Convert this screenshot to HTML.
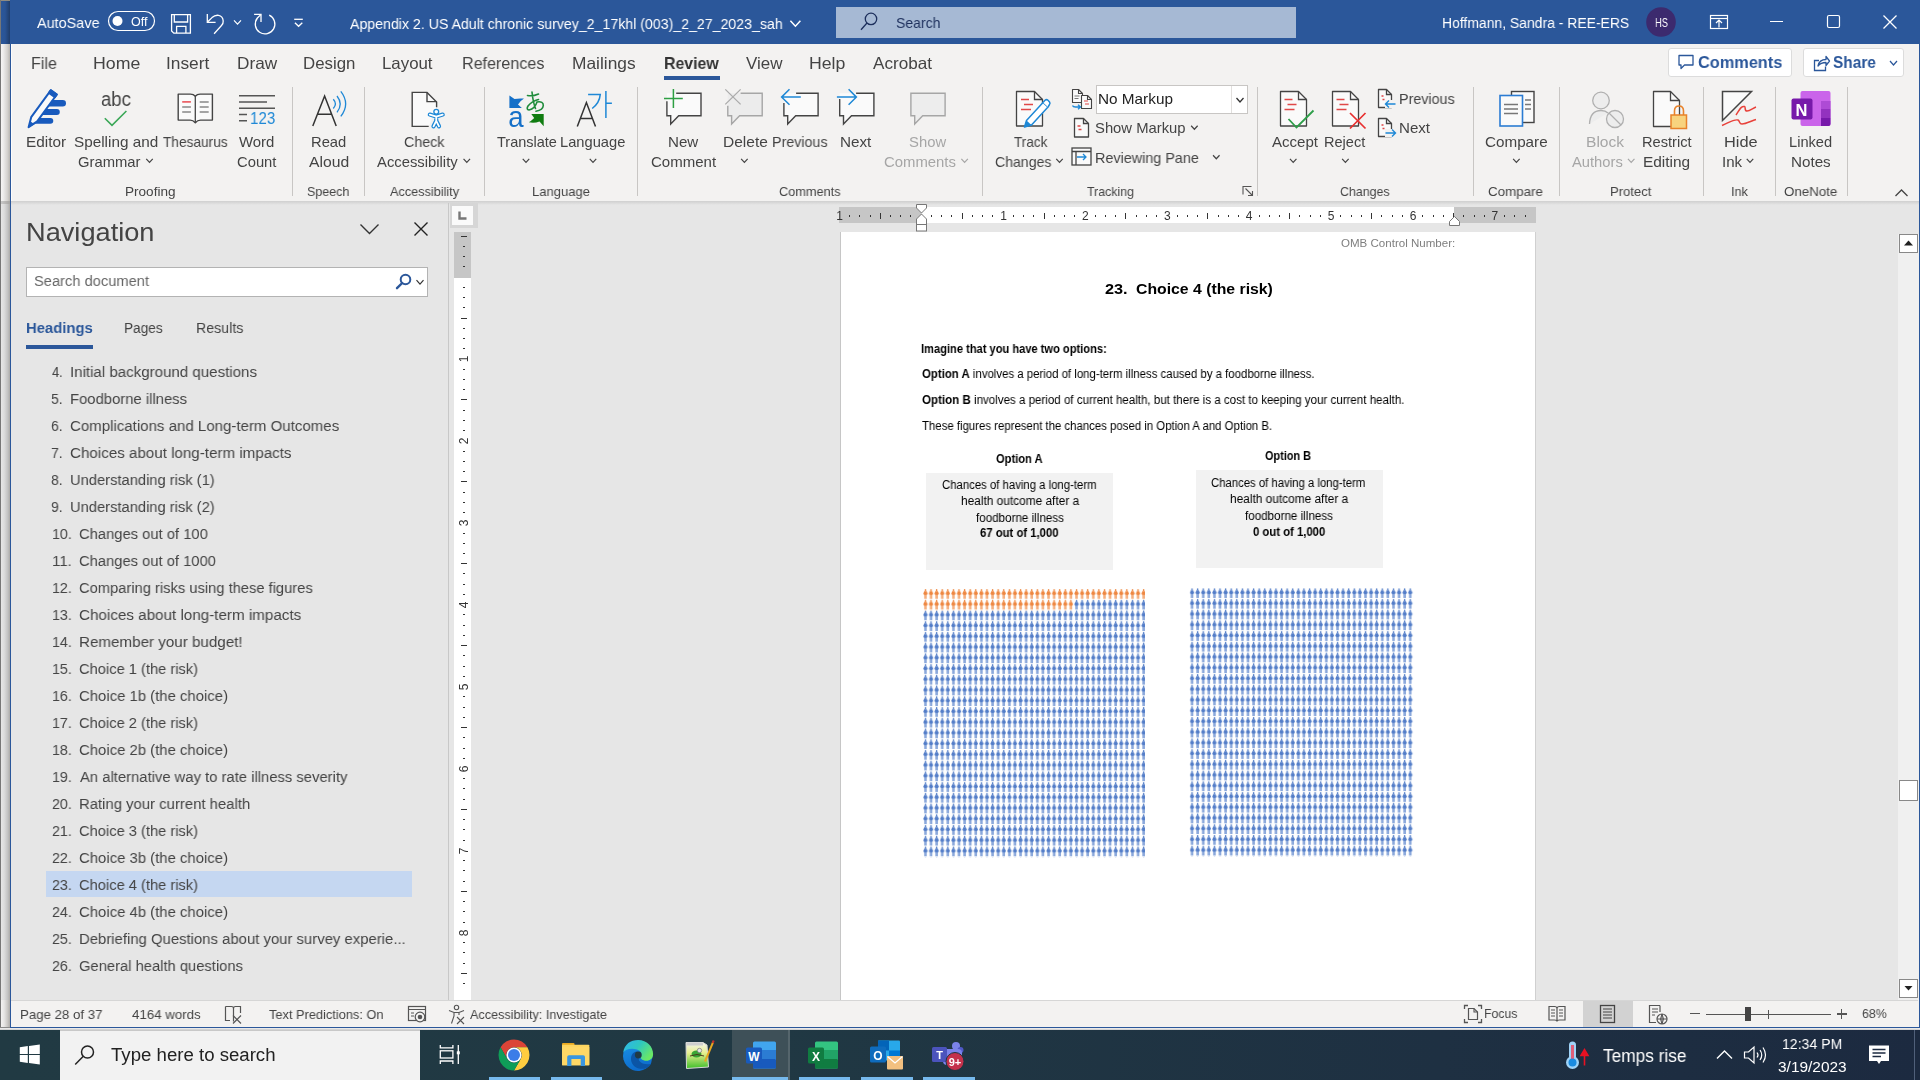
<!DOCTYPE html><html><head><meta charset="utf-8"><style>
html,body{margin:0;padding:0;width:1920px;height:1080px;overflow:hidden;background:#fff;font-family:"Liberation Sans",sans-serif;}
body{position:relative;}
svg{overflow:visible}
body>div[id]{will-change:transform}
</style></head><body>
<div style="position:absolute;left:0px;top:0px;width:1920px;height:1080px;background:#f3f2f1;"></div>
<div style="position:absolute;left:0px;top:0px;width:1px;height:1030px;background:#777777;"></div>
<div style="position:absolute;left:1px;top:0px;width:9px;height:1px;background:#8f8b80;"></div>
<div style="position:absolute;left:1px;top:1px;width:9px;height:43px;background:linear-gradient(90deg,#2b579a 0%,#2a5495 45%,#203d6a 100%);"></div>
<div style="position:absolute;left:1px;top:44px;width:9px;height:157px;background:linear-gradient(90deg,#f6f5f4 0%,#eeedec 25%,#d5d3d0 70%,#b9b6b1 100%);"></div>
<div style="position:absolute;left:1px;top:201px;width:9px;height:799px;background:linear-gradient(90deg,#e6e6e6 0%,#dcdcdc 35%,#c2c2c2 75%,#acaaa7 100%);"></div>
<div style="position:absolute;left:1px;top:201px;width:9px;height:3px;background:linear-gradient(90deg,#c8c8c8,#a8a6a3);"></div>
<div style="position:absolute;left:1px;top:1000px;width:9px;height:27px;background:linear-gradient(90deg,#f3f2f1 0%,#e6e5e4 35%,#c8c6c3 75%,#aeaca9 100%);"></div>
<div style="position:absolute;left:10px;top:0px;width:1910px;height:44px;background:#2b579a;"></div>
<div style="position:absolute;left:11px;top:44px;width:1908px;height:157px;background:#f3f2f1;"></div>
<div style="position:absolute;left:11px;top:201px;width:1908px;height:4px;background:linear-gradient(#d0d0d0,#e6e6e6);"></div>
<div style="position:absolute;left:11px;top:203px;width:1908px;height:797px;background:#e6e6e6;"></div>
<div style="position:absolute;left:11px;top:201px;width:1908px;height:4px;background:linear-gradient(#cfcfcf,#e6e6e6);"></div>
<div style="position:absolute;left:10px;top:0px;width:1px;height:1028px;background:#2b579a;"></div>
<div style="position:absolute;left:1919px;top:0px;width:1px;height:1028px;background:#2b579a;"></div>
<div style="position:absolute;left:11px;top:1000px;width:1907px;height:1px;background:#d6d6d6;"></div>
<div style="position:absolute;left:11px;top:1001px;width:1907px;height:26px;background:#f3f2f1;"></div>
<div style="position:absolute;left:10px;top:1027px;width:1910px;height:1px;background:#2b579a;"></div>
<div style="position:absolute;left:0px;top:1028px;width:1920px;height:2px;background:linear-gradient(#f4f4f4,#c8c8c8);"></div>
<div style="position:absolute;left:0px;top:1027px;width:10px;height:1px;background:#8a8a8a;"></div>
<div style="position:absolute;left:11px;top:44px;width:1px;height:157px;background:#fcfcfb;"></div>
<div style="position:absolute;left:0px;top:1030px;width:1920px;height:50px;background:#1f3540;"></div>
<div id="t0" style="position:absolute;left:37.38px;top:14.60px;font-size:15px;line-height:15px;color:#ffffff;font-weight:400;font-family:'Liberation Sans', sans-serif;white-space:nowrap;transform:scaleX(0.9615);transform-origin:0 0;">AutoSave</div>
<svg style="position:absolute;left:107px;top:10px;" width="50" height="24" viewBox="0 0 50 24"><rect x="1.5" y="1.5" width="46" height="19" rx="9.5" fill="none" stroke="#fff" stroke-width="1.2"/><circle cx="10.5" cy="11" r="5" fill="#fff"/></svg>
<div id="t1" style="position:absolute;left:131.00px;top:16.02px;font-size:12.5px;line-height:12.5px;color:#ffffff;font-weight:400;font-family:'Liberation Sans', sans-serif;white-space:nowrap;transform:scaleX(1.0000);transform-origin:0 0;">Off</div>
<svg style="position:absolute;left:0;top:0;pointer-events:none" width="1920" height="1080"><g fill="none" stroke="#fff" stroke-width="1.3"><path d="M171.6 14.6 H190.4 V33.1 H173.8 L171.6 30.9 Z"/><path d="M174.3 14.6 V22 H187.6 V14.6"/><path d="M176.6 33.1 V26.4 H185.9 V33.1"/><path d="M207.3 14 V22.3 H215.6"/><path d="M207.8 21.8 L212 17.6 Q215 14.8 218.5 15.3 Q222.8 16 223.2 21 Q223.4 23.5 221.5 25.5 L214.1 33.7"/><path d="M254.1 14.4 H261 V22"/><path d="M260.8 14.6 L257.4 18 A9.8 9.8 0 1 0 269.2 15.2"/><path d="M294.2 19.3 H302.8"/><path d="M294.9 22.7 L298.6 26.3 L302.3 22.7"/></g></svg>
<svg style="position:absolute;left:232px;top:18px;" width="12" height="8.8" viewBox="0 0 12 8.8"><polyline points="2.0,2.3000000000000007 5.5,6.1000000000000005 9.0,2.3000000000000007" fill="none" stroke="#ffffff" stroke-width="1.2"/></svg>
<div id="t2" style="position:absolute;left:350.37px;top:16.03px;font-size:15.2px;line-height:15.2px;color:#ffffff;font-weight:400;font-family:'Liberation Sans', sans-serif;white-space:nowrap;transform:scaleX(0.9317);transform-origin:0 0;">Appendix 2. US Adult chronic survey_2_17khl (003)_2_27_2023_sah</div>
<svg style="position:absolute;left:788px;top:18px;" width="15" height="10.5" viewBox="0 0 15 10.5"><polyline points="2.3999999999999773,2.6499999999999986 7.399999999999977,8.149999999999999 12.399999999999977,2.6499999999999986" fill="none" stroke="#ffffff" stroke-width="1.5"/></svg>
<div style="position:absolute;left:836px;top:7px;width:460px;height:31px;background:#a6b9d4;"></div>
<svg style="position:absolute;left:0;top:0;pointer-events:none" width="1920" height="1080"><circle cx="871" cy="18.9" r="5.7" fill="none" stroke="#1d2f5c" stroke-width="1.3"/><path d="M867 23 L861 29.8" stroke="#1d2f5c" stroke-width="1.3"/></svg>
<div id="t3" style="position:absolute;left:896.10px;top:15.10px;font-size:15px;line-height:15px;color:#1d2f5c;font-weight:400;font-family:'Liberation Sans', sans-serif;white-space:nowrap;transform:scaleX(0.9348);transform-origin:0 0;">Search</div>
<div id="t4" style="position:absolute;left:1442.34px;top:15.18px;font-size:15.5px;line-height:15.5px;color:#ffffff;font-weight:400;font-family:'Liberation Sans', sans-serif;white-space:nowrap;transform:scaleX(0.8995);transform-origin:0 0;">Hoffmann, Sandra - REE-ERS</div>
<svg style="position:absolute;left:1646px;top:7px;" width="30" height="30" viewBox="0 0 30 30"><circle cx="15" cy="15" r="14.8" fill="#3c2a6e"/></svg>
<div id="t5" style="position:absolute;left:1655.14px;top:16.00px;font-size:13px;line-height:13px;color:#ffffff;font-weight:400;font-family:'Liberation Sans', sans-serif;white-space:nowrap;transform:scaleX(0.7143);transform-origin:0 0;">HS</div>
<svg style="position:absolute;left:1708px;top:13px;" width="22" height="18" viewBox="0 0 22 18"><rect x="2.5" y="2.5" width="17" height="13" fill="none" stroke="#fff" stroke-width="1.2"/><path d="M2.5 5.5h17" stroke="#fff" stroke-width="1.2"/><path d="M11 14.5v-7M8 10l3-3 3 3" fill="none" stroke="#fff" stroke-width="1.2"/></svg>
<div style="position:absolute;left:1770px;top:21px;width:13px;height:1.3px;background:#ffffff;"></div>
<svg style="position:absolute;left:1826px;top:14px;" width="16" height="16" viewBox="0 0 16 16"><rect x="1.5" y="1.5" width="12" height="12" rx="1.5" fill="none" stroke="#fff" stroke-width="1.2"/></svg>
<svg style="position:absolute;left:1882px;top:14px;" width="16" height="16" viewBox="0 0 16 16"><path d="M1.5 1.5L14.5 14.5M14.5 1.5L1.5 14.5" stroke="#fff" stroke-width="1.3"/></svg>
<div id="t6" style="position:absolute;left:31.41px;top:55.33px;font-size:16.5px;line-height:16.5px;color:#444;font-weight:400;font-family:'Liberation Sans', sans-serif;white-space:nowrap;transform:scaleX(0.9720);transform-origin:0 0;">File</div>
<div id="t7" style="position:absolute;left:92.75px;top:55.33px;font-size:16.5px;line-height:16.5px;color:#444;font-weight:400;font-family:'Liberation Sans', sans-serif;white-space:nowrap;transform:scaleX(1.0738);transform-origin:0 0;">Home</div>
<div id="t8" style="position:absolute;left:165.95px;top:55.33px;font-size:16.5px;line-height:16.5px;color:#444;font-weight:400;font-family:'Liberation Sans', sans-serif;white-space:nowrap;transform:scaleX(1.0500);transform-origin:0 0;">Insert</div>
<div id="t9" style="position:absolute;left:236.76px;top:55.33px;font-size:16.5px;line-height:16.5px;color:#444;font-weight:400;font-family:'Liberation Sans', sans-serif;white-space:nowrap;transform:scaleX(1.0432);transform-origin:0 0;">Draw</div>
<div id="t10" style="position:absolute;left:302.98px;top:55.33px;font-size:16.5px;line-height:16.5px;color:#444;font-weight:400;font-family:'Liberation Sans', sans-serif;white-space:nowrap;transform:scaleX(1.0200);transform-origin:0 0;">Design</div>
<div id="t11" style="position:absolute;left:381.98px;top:55.33px;font-size:16.5px;line-height:16.5px;color:#444;font-weight:400;font-family:'Liberation Sans', sans-serif;white-space:nowrap;transform:scaleX(1.0204);transform-origin:0 0;">Layout</div>
<div id="t12" style="position:absolute;left:462.04px;top:55.33px;font-size:16.5px;line-height:16.5px;color:#444;font-weight:400;font-family:'Liberation Sans', sans-serif;white-space:nowrap;transform:scaleX(0.9759);transform-origin:0 0;">References</div>
<div id="t13" style="position:absolute;left:572.32px;top:55.33px;font-size:16.5px;line-height:16.5px;color:#444;font-weight:400;font-family:'Liberation Sans', sans-serif;white-space:nowrap;transform:scaleX(1.0508);transform-origin:0 0;">Mailings</div>
<div id="t14" style="position:absolute;left:746.00px;top:55.33px;font-size:16.5px;line-height:16.5px;color:#444;font-weight:400;font-family:'Liberation Sans', sans-serif;white-space:nowrap;transform:scaleX(1.0286);transform-origin:0 0;">View</div>
<div id="t15" style="position:absolute;left:809.33px;top:55.33px;font-size:16.5px;line-height:16.5px;color:#444;font-weight:400;font-family:'Liberation Sans', sans-serif;white-space:nowrap;transform:scaleX(1.0719);transform-origin:0 0;">Help</div>
<div id="t16" style="position:absolute;left:873.39px;top:55.33px;font-size:16.5px;line-height:16.5px;color:#444;font-weight:400;font-family:'Liberation Sans', sans-serif;white-space:nowrap;transform:scaleX(1.0368);transform-origin:0 0;">Acrobat</div>
<div id="t17" style="position:absolute;left:663.62px;top:55.33px;font-size:16.5px;line-height:16.5px;color:#333;font-weight:700;font-family:'Liberation Sans', sans-serif;white-space:nowrap;transform:scaleX(0.9625);transform-origin:0 0;">Review</div>
<div style="position:absolute;left:664px;top:76px;width:56px;height:4px;background:#2b579a;"></div>
<div style="position:absolute;left:1668px;top:48px;width:124px;height:29px;background:#fff;border:1px solid #dcdcdc;border-radius:3px;box-sizing:border-box;"></div>
<svg style="position:absolute;left:1677px;top:53px;" width="18" height="18" viewBox="0 0 18 18"><path d="M2 2.5h14v9.5H7.5L4 15.5V12H2z" fill="none" stroke="#2b579a" stroke-width="1.3" stroke-linejoin="round"/></svg>
<div id="t18" style="position:absolute;left:1697.55px;top:54.36px;font-size:17px;line-height:17px;color:#2b579a;font-weight:700;font-family:'Liberation Sans', sans-serif;white-space:nowrap;transform:scaleX(0.9593);transform-origin:0 0;">Comments</div>
<div style="position:absolute;left:1803px;top:48px;width:101px;height:29px;background:#fff;border:1px solid #dcdcdc;border-radius:3px;box-sizing:border-box;"></div>
<svg style="position:absolute;left:1811px;top:52px;" width="20" height="20" viewBox="0 0 20 20"><path d="M8 8.5H3.5v10h11v-4" fill="none" stroke="#2b579a" stroke-width="1.3"/><path d="M7 14 C8 9 11 7.5 15 7.5V4.5L18.5 9 15 13.5v-3C11.5 10.5 9 11.5 7 14z" fill="none" stroke="#2b579a" stroke-width="1.3" stroke-linejoin="round"/></svg>
<div id="t19" style="position:absolute;left:1832.62px;top:54.36px;font-size:17px;line-height:17px;color:#2b579a;font-weight:700;font-family:'Liberation Sans', sans-serif;white-space:nowrap;transform:scaleX(0.9076);transform-origin:0 0;">Share</div>
<svg style="position:absolute;left:1888px;top:59px;" width="12" height="9" viewBox="0 0 12 9"><polyline points="2.0,2.0 5.5,6.0 9.0,2.0" fill="none" stroke="#2b579a" stroke-width="1.2"/></svg>
<div style="position:absolute;left:292.0px;top:87px;width:1px;height:109px;background:#c8c6c4;"></div>
<div style="position:absolute;left:364.0px;top:87px;width:1px;height:109px;background:#c8c6c4;"></div>
<div style="position:absolute;left:484.0px;top:87px;width:1px;height:109px;background:#c8c6c4;"></div>
<div style="position:absolute;left:637.0px;top:87px;width:1px;height:109px;background:#c8c6c4;"></div>
<div style="position:absolute;left:982.0px;top:87px;width:1px;height:109px;background:#c8c6c4;"></div>
<div style="position:absolute;left:1257.0px;top:87px;width:1px;height:109px;background:#c8c6c4;"></div>
<div style="position:absolute;left:1473.0px;top:87px;width:1px;height:109px;background:#c8c6c4;"></div>
<div style="position:absolute;left:1559.0px;top:87px;width:1px;height:109px;background:#c8c6c4;"></div>
<div style="position:absolute;left:1703.0px;top:87px;width:1px;height:109px;background:#c8c6c4;"></div>
<div style="position:absolute;left:1775.0px;top:87px;width:1px;height:109px;background:#c8c6c4;"></div>
<div style="position:absolute;left:1847.0px;top:87px;width:1px;height:109px;background:#c8c6c4;"></div>
<svg style="position:absolute;left:0;top:0;pointer-events:none" width="1920" height="1080"><rect x="45" y="100" width="21" height="6.6" rx="3.3" fill="#185abd"/><rect x="39" y="109.1" width="20.8" height="5.9" rx="2.95" fill="#185abd"/><rect x="33" y="117.9" width="20.3" height="5.9" rx="2.95" fill="#185abd"/><path d="M28.6 127.2 L31.2 117.2 L50.9 90.2 L56.8 94.5 L37.2 121.4 Z" fill="#fafafa" stroke="#185abd" stroke-width="2" stroke-linejoin="round"/><path d="M50.9 90.2 L56.8 94.5 L54.9 97.2 L49 92.9 Z" fill="#185abd" stroke="#185abd" stroke-width="2" stroke-linejoin="round"/><path d="M28.2 127.8 L30 121 L34.5 124.3 Z" fill="#185abd"/></svg>
<div id="t20" style="position:absolute;left:26.11px;top:135.03px;font-size:14.5px;line-height:14.5px;color:#444;font-weight:400;font-family:'Liberation Sans', sans-serif;white-space:nowrap;transform:scaleX(1.0568);transform-origin:0 0;">Editor</div>
<div id="t21" style="position:absolute;left:101.07px;top:89.37px;font-size:20px;line-height:20px;color:#444;font-weight:400;font-family:'Liberation Sans', sans-serif;white-space:nowrap;transform:scaleX(0.9274);transform-origin:0 0;">abc</div>
<svg style="position:absolute;left:100px;top:108px;" width="30" height="20" viewBox="0 0 30 20"><polyline points="4.8,10.2 12,17.4 26.4,3" fill="none" stroke="#3aa757" stroke-width="1.6"/></svg>
<div id="t22" style="position:absolute;left:74.14px;top:135.03px;font-size:14.5px;line-height:14.5px;color:#444;font-weight:400;font-family:'Liberation Sans', sans-serif;white-space:nowrap;transform:scaleX(1.0551);transform-origin:0 0;">Spelling and</div>
<div id="t23" style="position:absolute;left:77.97px;top:155.03px;font-size:14.5px;line-height:14.5px;color:#444;font-weight:400;font-family:'Liberation Sans', sans-serif;white-space:nowrap;transform:scaleX(1.0208);transform-origin:0 0;">Grammar</div>
<svg style="position:absolute;left:144px;top:156px;" width="11.5" height="8.5" viewBox="0 0 11.5 8.5"><polyline points="2.25,2.8499999999999943 5.5,6.349999999999994 8.75,2.8499999999999943" fill="none" stroke="#444" stroke-width="1.2"/></svg>
<svg style="position:absolute;left:0;top:0;pointer-events:none" width="1920" height="1080"><path d="M178.2 94.1 H190.5 Q193.5 94.1 195.3 96.2 Q197.1 94.1 200.1 94.1 H212.4 V120.1 H200.5 Q197.5 120.1 195.3 122.8 Q193.1 120.1 190.1 120.1 H178.2 Z" fill="#fafafa" stroke="#444" stroke-width="1.4" stroke-linejoin="round"/><path d="M195.3 96.2 V122.5" stroke="#444" stroke-width="1.3"/><path d="M182.2 101.9h8.7" stroke="#e8484e" stroke-width="1.5"/><path d="M182.2 106.9h8.7M182.2 111.9h8.7M199.7 101.9h9M199.7 106.9h9M199.7 111.9h9" stroke="#888" stroke-width="1.5"/></svg>
<div id="t24" style="position:absolute;left:163.22px;top:135.03px;font-size:14.5px;line-height:14.5px;color:#444;font-weight:400;font-family:'Liberation Sans', sans-serif;white-space:nowrap;transform:scaleX(0.9441);transform-origin:0 0;">Thesaurus</div>
<svg style="position:absolute;left:0;top:0;pointer-events:none" width="1920" height="1080"><path d="M239 95.7h36M239 102.1h28M239 108.2h36M239 114.4h8M239 120.7h8" stroke="#555" stroke-width="1.5"/></svg>
<div id="t25" style="position:absolute;left:250.11px;top:110.21px;font-size:17px;line-height:17px;color:#1e88d6;font-weight:400;font-family:'Liberation Sans', sans-serif;white-space:nowrap;transform:scaleX(0.8889);transform-origin:0 0;">123</div>
<div id="t26" style="position:absolute;left:238.99px;top:135.03px;font-size:14.5px;line-height:14.5px;color:#444;font-weight:400;font-family:'Liberation Sans', sans-serif;white-space:nowrap;transform:scaleX(1.0294);transform-origin:0 0;">Word</div>
<div id="t27" style="position:absolute;left:236.58px;top:155.03px;font-size:14.5px;line-height:14.5px;color:#444;font-weight:400;font-family:'Liberation Sans', sans-serif;white-space:nowrap;transform:scaleX(1.0184);transform-origin:0 0;">Count</div>
<div id="t28" style="position:absolute;left:124.99px;top:184.77px;font-size:13.5px;line-height:13.5px;color:#444;font-weight:400;font-family:'Liberation Sans', sans-serif;white-space:nowrap;transform:scaleX(1.0051);transform-origin:0 0;">Proofing</div>
<svg style="position:absolute;left:0;top:0;pointer-events:none" width="1920" height="1080"><path d="M312.8 126 L324.6 96 L336.2 126 M317.6 114.3 H331.4" fill="none" stroke="#333" stroke-width="1.5"/><path d="M333.3 99.3 Q337.5 103.9 333.3 108.5 M337 96 Q343.5 104.1 337 112.3 M340.8 91.4 Q350.5 103.9 340.8 116.4" fill="none" stroke="#1e88d6" stroke-width="1.3"/></svg>
<div id="t29" style="position:absolute;left:310.98px;top:135.03px;font-size:14.5px;line-height:14.5px;color:#444;font-weight:400;font-family:'Liberation Sans', sans-serif;white-space:nowrap;transform:scaleX(1.0182);transform-origin:0 0;">Read</div>
<div id="t30" style="position:absolute;left:309.00px;top:155.03px;font-size:14.5px;line-height:14.5px;color:#444;font-weight:400;font-family:'Liberation Sans', sans-serif;white-space:nowrap;transform:scaleX(1.0833);transform-origin:0 0;">Aloud</div>
<div id="t31" style="position:absolute;left:306.65px;top:184.77px;font-size:13.5px;line-height:13.5px;color:#444;font-weight:400;font-family:'Liberation Sans', sans-serif;white-space:nowrap;transform:scaleX(0.9250);transform-origin:0 0;">Speech</div>
<svg style="position:absolute;left:0;top:0;pointer-events:none" width="1920" height="1080"><path d="M428.7 126.4 H412.2 V92.4 H427 L436.6 102 V107.3" fill="#fafafa" stroke="#444" stroke-width="1.4" stroke-linejoin="miter"/><path d="M427 92.4 V101.6 H436.6" fill="none" stroke="#444" stroke-width="1.4"/><g stroke-linecap="round" stroke-linejoin="round" fill="none"><path d="M429.8 114.6 L436.25 116.6 L442.7 114.6 M436.25 116.6 V120.8 L433.5 126.3 M436.25 120.8 L439 126.3" stroke="#1e88d6" stroke-width="4.2"/><path d="M429.8 114.6 L436.25 116.6 L442.7 114.6 M436.25 116.6 V120.8 L433.5 126.3 M436.25 120.8 L439 126.3" stroke="#fff" stroke-width="1.8"/></g><circle cx="436.25" cy="111.8" r="2.4" fill="#fff" stroke="#1e88d6" stroke-width="1.3"/></svg>
<div id="t32" style="position:absolute;left:404.40px;top:135.03px;font-size:14.5px;line-height:14.5px;color:#444;font-weight:400;font-family:'Liberation Sans', sans-serif;white-space:nowrap;transform:scaleX(0.9850);transform-origin:0 0;">Check</div>
<div id="t33" style="position:absolute;left:377.00px;top:155.03px;font-size:14.5px;line-height:14.5px;color:#444;font-weight:400;font-family:'Liberation Sans', sans-serif;white-space:nowrap;transform:scaleX(1.0215);transform-origin:0 0;">Accessibility</div>
<svg style="position:absolute;left:461px;top:156px;" width="11.5" height="8.5" viewBox="0 0 11.5 8.5"><polyline points="2.5500000000000114,2.8499999999999943 5.800000000000011,6.349999999999994 9.050000000000011,2.8499999999999943" fill="none" stroke="#444" stroke-width="1.2"/></svg>
<div id="t34" style="position:absolute;left:390.00px;top:184.77px;font-size:13.5px;line-height:13.5px;color:#444;font-weight:400;font-family:'Liberation Sans', sans-serif;white-space:nowrap;transform:scaleX(0.9397);transform-origin:0 0;">Accessibility</div>
<svg style="position:absolute;left:0;top:0;pointer-events:none" width="1920" height="1080"><path d="M509.4 95.4 L514.5 99 Q519 98 524 98.6 Q519.5 101.5 518 104.5 L521.9 107.9 H509.4 Z" fill="#1570c8"/><text x="508.2" y="126.6" font-family="Liberation Sans" font-size="30" fill="#1570c8" transform="translate(508.2,0) scale(0.92,1) translate(-508.2,0)">a</text><path d="M527.5 95.5 Q533 96.5 538.5 94 M532 92 Q533 102 535.5 108.5 M538.5 99.5 Q532 101 528 106 Q526 109.5 529 110 Q535 108.5 537 102 Q543.5 101 543.3 105.5 Q543 110 536 111.3" fill="none" stroke="#1f8c3b" stroke-width="1.6" stroke-linecap="round"/><path d="M543.7 126.3 V114.1 H531.3 L534.2 117.9 Q531 121 528.8 122.3 Q534.5 123.5 539.5 121.5 Z" fill="#107c10"/></svg>
<div id="t35" style="position:absolute;left:496.79px;top:135.03px;font-size:14.5px;line-height:14.5px;color:#444;font-weight:400;font-family:'Liberation Sans', sans-serif;white-space:nowrap;transform:scaleX(0.9983);transform-origin:0 0;">Translate</div>
<svg style="position:absolute;left:520px;top:156px;" width="11.5" height="8.5" viewBox="0 0 11.5 8.5"><polyline points="2.75,2.8499999999999943 6.0,6.349999999999994 9.25,2.8499999999999943" fill="none" stroke="#444" stroke-width="1.2"/></svg>
<svg style="position:absolute;left:0;top:0;pointer-events:none" width="1920" height="1080"><path d="M577.3 126.6 L586.4 102.6 L595.5 126.6 M580.6 118.5 H592.2" fill="none" stroke="#333" stroke-width="1.5"/><path d="M588.1 94.4 H600.3 Q599.5 103 592.2 108.5 M605.9 91 V117.9 M605.9 103.2 H611.9" fill="none" stroke="#1e88d6" stroke-width="1.5"/></svg>
<div id="t36" style="position:absolute;left:560.18px;top:135.03px;font-size:14.5px;line-height:14.5px;color:#444;font-weight:400;font-family:'Liberation Sans', sans-serif;white-space:nowrap;transform:scaleX(1.0127);transform-origin:0 0;">Language</div>
<svg style="position:absolute;left:587px;top:156px;" width="11.5" height="8.5" viewBox="0 0 11.5 8.5"><polyline points="2.75,2.8499999999999943 6.0,6.349999999999994 9.25,2.8499999999999943" fill="none" stroke="#444" stroke-width="1.2"/></svg>
<div id="t37" style="position:absolute;left:532.03px;top:184.77px;font-size:13.5px;line-height:13.5px;color:#444;font-weight:400;font-family:'Liberation Sans', sans-serif;white-space:nowrap;transform:scaleX(0.9661);transform-origin:0 0;">Language</div>
<svg style="position:absolute;left:0;top:0;pointer-events:none" width="1920" height="1080"><path d="M666.9 93.3 H701 V115.8 H678.6999999999999 L670.6999999999999 124 V115.8 H666.9 Z" fill="#fafafa"/><path d="M676.2 93.3 H701 V115.8 H678.6999999999999 L670.6999999999999 124 V115.8 H666.9 V101.3" fill="none" stroke="#444" stroke-width="1.4" stroke-linejoin="miter"/><rect x="663" y="88" width="21" height="21" fill="#f3f2f1" opacity="0"/><path d="M664 98.5H682.8M673.4 89.1V107.9" stroke="#2ea043" stroke-width="1.5"/></svg>
<svg style="position:absolute;left:0;top:0;pointer-events:none" width="1920" height="1080"><path d="M727.8 93.3 H762.2 V115.8 H739.6 L731.6 124 V115.8 H727.8 Z" fill="#ececec"/><path d="M740.6 93.3 H762.2 V115.8 H739.6 L731.6 124 V115.8 H727.8 V105.7" fill="none" stroke="#a6a6a6" stroke-width="1.4"/><path d="M725.3 89.4L740.6 104.4M740.6 89.4L725.3 104.4" stroke="#ababab" stroke-width="1.3"/></svg>
<svg style="position:absolute;left:0;top:0;pointer-events:none" width="1920" height="1080"><path d="M783.9 93.3 H818.1 V115.8 H795.6999999999999 L787.6999999999999 124 V115.8 H783.9 Z" fill="#fafafa"/><path d="M796.1 93.3 H818.1 V115.8 H795.6999999999999 L787.6999999999999 124 V115.8 H783.9 V102.9" fill="none" stroke="#444" stroke-width="1.4" stroke-linejoin="miter"/><path d="M781.5 97.1H800.8M789.5 89.3L781.6 97.1L789.5 104.8" fill="none" stroke="#1e88d6" stroke-width="1.5"/></svg>
<svg style="position:absolute;left:0;top:0;pointer-events:none" width="1920" height="1080"><path d="M839.7 93.3 H873.9 V115.8 H851.5 L843.5 124 V115.8 H839.7 Z" fill="#fafafa"/><path d="M856.1 93.3 H873.9 V115.8 H851.5 L843.5 124 V115.8 H839.7 V99.1" fill="none" stroke="#444" stroke-width="1.4" stroke-linejoin="miter"/><path d="M836.9 97.1H856M848.6 89.3L856.4 97.1L848.6 104.8" fill="none" stroke="#1e88d6" stroke-width="1.5"/></svg>
<svg style="position:absolute;left:0;top:0;pointer-events:none" width="1920" height="1080"><path d="M910.9 93.3 H945.1 V115.8 H922.6999999999999 L914.6999999999999 124 V115.8 H910.9 Z" fill="#ededed"/><path d="M910.9 93.3 H945.1 V115.8 H922.6999999999999 L914.6999999999999 124 V115.8 H910.9 V93.3 Z" fill="none" stroke="#a6a6a6" stroke-width="1.4" stroke-linejoin="miter"/></svg>
<div id="t38" style="position:absolute;left:668.13px;top:135.03px;font-size:14.5px;line-height:14.5px;color:#444;font-weight:400;font-family:'Liberation Sans', sans-serif;white-space:nowrap;transform:scaleX(1.0429);transform-origin:0 0;">New</div>
<div id="t39" style="position:absolute;left:650.77px;top:155.03px;font-size:14.5px;line-height:14.5px;color:#444;font-weight:400;font-family:'Liberation Sans', sans-serif;white-space:nowrap;transform:scaleX(1.0355);transform-origin:0 0;">Comment</div>
<div id="t40" style="position:absolute;left:722.51px;top:135.03px;font-size:14.5px;line-height:14.5px;color:#444;font-weight:400;font-family:'Liberation Sans', sans-serif;white-space:nowrap;transform:scaleX(1.0700);transform-origin:0 0;">Delete</div>
<svg style="position:absolute;left:739px;top:156px;" width="11.5" height="8.5" viewBox="0 0 11.5 8.5"><polyline points="2.1499999999999773,2.8499999999999943 5.399999999999977,6.349999999999994 8.649999999999977,2.8499999999999943" fill="none" stroke="#444" stroke-width="1.2"/></svg>
<div id="t41" style="position:absolute;left:772.02px;top:135.03px;font-size:14.5px;line-height:14.5px;color:#444;font-weight:400;font-family:'Liberation Sans', sans-serif;white-space:nowrap;transform:scaleX(0.9855);transform-origin:0 0;">Previous</div>
<div id="t42" style="position:absolute;left:839.92px;top:135.03px;font-size:14.5px;line-height:14.5px;color:#444;font-weight:400;font-family:'Liberation Sans', sans-serif;white-space:nowrap;transform:scaleX(1.0517);transform-origin:0 0;">Next</div>
<div id="t43" style="position:absolute;left:908.98px;top:135.03px;font-size:14.5px;line-height:14.5px;color:#a6a6a6;font-weight:400;font-family:'Liberation Sans', sans-serif;white-space:nowrap;transform:scaleX(1.0229);transform-origin:0 0;">Show</div>
<div id="t44" style="position:absolute;left:883.97px;top:155.03px;font-size:14.5px;line-height:14.5px;color:#a6a6a6;font-weight:400;font-family:'Liberation Sans', sans-serif;white-space:nowrap;transform:scaleX(1.0261);transform-origin:0 0;">Comments</div>
<svg style="position:absolute;left:959px;top:156px;" width="11.5" height="8.5" viewBox="0 0 11.5 8.5"><polyline points="2.3500000000000227,2.8499999999999943 5.600000000000023,6.349999999999994 8.850000000000023,2.8499999999999943" fill="none" stroke="#a6a6a6" stroke-width="1.2"/></svg>
<div id="t45" style="position:absolute;left:779.06px;top:184.77px;font-size:13.5px;line-height:13.5px;color:#444;font-weight:400;font-family:'Liberation Sans', sans-serif;white-space:nowrap;transform:scaleX(0.9437);transform-origin:0 0;">Comments</div>
<svg style="position:absolute;left:1010px;top:88px;" width="46" height="44" viewBox="0 0 46 44"><path d="M6.5 3.5H24.5L32.5 11.5V38.0H6.5Z" fill="#fafafa" stroke="#444" stroke-width="1.3" stroke-linejoin="round"/><path d="M24.5 3.5V11.5H32.5" fill="none" stroke="#444" stroke-width="1.3"/><path d="M11 11.5h8M14 16.5h9M11 21.5h10" stroke="#e04848" stroke-width="1.5"/><path d="M14.5 39 L16.5 32.5 L33 14.5 L38 19 L21.5 37 Z" fill="#fff" stroke="#1e88d6" stroke-width="1.5" stroke-linejoin="round"/><path d="M14.5 39 L16.5 32.5 L21.5 37Z" fill="#1e88d6"/><path d="M33 14.5 L35 12.3 Q36.5 11 38 12.3 L39.5 14 Q40.5 15.5 39.5 16.5 L38 19" fill="#fff" stroke="#1e88d6" stroke-width="1.5"/></svg>
<div id="t46" style="position:absolute;left:1013.61px;top:135.03px;font-size:14.5px;line-height:14.5px;color:#444;font-weight:400;font-family:'Liberation Sans', sans-serif;white-space:nowrap;transform:scaleX(0.9333);transform-origin:0 0;">Track</div>
<div id="t47" style="position:absolute;left:994.62px;top:155.03px;font-size:14.5px;line-height:14.5px;color:#444;font-weight:400;font-family:'Liberation Sans', sans-serif;white-space:nowrap;transform:scaleX(0.9719);transform-origin:0 0;">Changes</div>
<svg style="position:absolute;left:1054px;top:156px;" width="11.5" height="8.5" viewBox="0 0 11.5 8.5"><polyline points="2.25,2.8499999999999943 5.5,6.349999999999994 8.75,2.8499999999999943" fill="none" stroke="#444" stroke-width="1.2"/></svg>
<svg style="position:absolute;left:1071px;top:88px;" width="24" height="22" viewBox="0 0 24 22"><path d="M1.5 1.5H7.5L11.5 5.5V14.5H1.5Z" fill="#fafafa" stroke="#444" stroke-width="1.1" stroke-linejoin="round"/><path d="M7.5 1.5V5.5H11.5" fill="none" stroke="#444" stroke-width="1.1"/><path d="M10.5 7.5H16.5L20.5 11.5V20.5H10.5Z" fill="#fafafa" stroke="#444" stroke-width="1.1" stroke-linejoin="round"/><path d="M16.5 7.5V11.5H20.5" fill="none" stroke="#444" stroke-width="1.1"/><path d="M3.5 8h5M3.5 10.5h4" stroke="#666" stroke-width="0.9"/><path d="M13 13h4M14 16h4" stroke="#e04848" stroke-width="1.1"/><path d="M1.5 17.5 Q2 19 4.5 19 H9 M7 16.7 L9.5 19 L7 21.3" fill="none" stroke="#1e88d6" stroke-width="1.3"/></svg>
<div style="position:absolute;left:1096px;top:85px;width:152px;height:29px;background:#fff;border:1px solid #c8c6c4;box-sizing:border-box;"></div>
<div style="position:absolute;left:1231px;top:86px;width:1px;height:27px;background:#e1dfdd;"></div>
<div id="t48" style="position:absolute;left:1098.11px;top:92.13px;font-size:14.5px;line-height:14.5px;color:#222;font-weight:400;font-family:'Liberation Sans', sans-serif;white-space:nowrap;transform:scaleX(1.0565);transform-origin:0 0;">No Markup</div>
<svg style="position:absolute;left:1234px;top:96px;" width="12" height="9" viewBox="0 0 12 9"><polyline points="2.5,2.0 6.0,6.0 9.5,2.0" fill="none" stroke="#333" stroke-width="1.3"/></svg>
<svg style="position:absolute;left:1073px;top:117px;" width="20" height="24" viewBox="0 0 20 24"><path d="M1.5 1.5H10.5L15.5 6.5V20.0H1.5Z" fill="#fafafa" stroke="#444" stroke-width="1.3" stroke-linejoin="round"/><path d="M10.5 1.5V6.5H15.5" fill="none" stroke="#444" stroke-width="1.3"/><path d="M4.5 9h3M5.5 12.5h3" stroke="#e04848" stroke-width="1.4"/></svg>
<div id="t49" style="position:absolute;left:1095.36px;top:121.33px;font-size:14.5px;line-height:14.5px;color:#444;font-weight:400;font-family:'Liberation Sans', sans-serif;white-space:nowrap;transform:scaleX(1.0218);transform-origin:0 0;">Show Markup</div>
<svg style="position:absolute;left:1189px;top:123px;" width="11.5" height="8.5" viewBox="0 0 11.5 8.5"><polyline points="2.150000000000091,2.75 5.400000000000091,6.25 8.650000000000091,2.75" fill="none" stroke="#444" stroke-width="1.2"/></svg>
<svg style="position:absolute;left:1071px;top:147px;" width="22" height="21" viewBox="0 0 22 21"><rect x="1" y="1" width="19" height="17" fill="#fafafa" stroke="#444" stroke-width="1.3"/><path d="M1 4.5h19M5 4.5v13.5" stroke="#444" stroke-width="1.3"/><path d="M6 10h9M12 7l3 3-3 3" fill="none" stroke="#1e88d6" stroke-width="1.3"/></svg>
<div id="t50" style="position:absolute;left:1095.40px;top:150.53px;font-size:14.5px;line-height:14.5px;color:#444;font-weight:400;font-family:'Liberation Sans', sans-serif;white-space:nowrap;transform:scaleX(0.9913);transform-origin:0 0;">Reviewing Pane</div>
<svg style="position:absolute;left:1211px;top:153px;" width="11.5" height="8.5" viewBox="0 0 11.5 8.5"><polyline points="2.0499999999999545,2.25 5.2999999999999545,5.75 8.549999999999955,2.25" fill="none" stroke="#444" stroke-width="1.2"/></svg>
<div id="t51" style="position:absolute;left:1087.37px;top:184.77px;font-size:13.5px;line-height:13.5px;color:#444;font-weight:400;font-family:'Liberation Sans', sans-serif;white-space:nowrap;transform:scaleX(0.9157);transform-origin:0 0;">Tracking</div>
<svg style="position:absolute;left:1242px;top:185px;" width="12" height="12" viewBox="0 0 12 12"><path d="M1 9.5V1.5H9.5M3.5 3.5L10 10M6 10.5h4.5V6" fill="none" stroke="#555" stroke-width="1.1"/></svg>
<svg style="position:absolute;left:1276px;top:88px;" width="46" height="44" viewBox="0 0 46 44"><path d="M4.5 3.5H22.5L30.5 11.5V38.0H4.5Z" fill="#fafafa" stroke="#444" stroke-width="1.3" stroke-linejoin="round"/><path d="M22.5 3.5V11.5H30.5" fill="none" stroke="#444" stroke-width="1.3"/><path d="M8.5 11.5h8M11.5 16.5h9M8.5 21.5h10" stroke="#e04848" stroke-width="1.5"/><rect x="10" y="22" width="30" height="18" fill="#f3f2f1" opacity="0"/><polyline points="12.5,31 20.5,39.5 37.5,22.5" fill="none" stroke="#2e9e49" stroke-width="1.8"/></svg>
<div id="t52" style="position:absolute;left:1271.61px;top:135.03px;font-size:14.5px;line-height:14.5px;color:#444;font-weight:400;font-family:'Liberation Sans', sans-serif;white-space:nowrap;transform:scaleX(1.0386);transform-origin:0 0;">Accept</div>
<svg style="position:absolute;left:1287px;top:156px;" width="11.5" height="8.5" viewBox="0 0 11.5 8.5"><polyline points="2.9500000000000455,2.8499999999999943 6.2000000000000455,6.349999999999994 9.450000000000045,2.8499999999999943" fill="none" stroke="#444" stroke-width="1.2"/></svg>
<svg style="position:absolute;left:1328px;top:88px;" width="46" height="44" viewBox="0 0 46 44"><path d="M4.5 3.5H22.5L30.5 11.5V38.0H4.5Z" fill="#fafafa" stroke="#444" stroke-width="1.3" stroke-linejoin="round"/><path d="M22.5 3.5V11.5H30.5" fill="none" stroke="#444" stroke-width="1.3"/><path d="M8.5 11.5h8M11.5 16.5h9M8.5 21.5h10" stroke="#e04848" stroke-width="1.5"/><path d="M22 25 L37.5 40.5 M37.5 25 L22 40.5" stroke="#e83030" stroke-width="1.7"/></svg>
<div id="t53" style="position:absolute;left:1324.38px;top:135.03px;font-size:14.5px;line-height:14.5px;color:#444;font-weight:400;font-family:'Liberation Sans', sans-serif;white-space:nowrap;transform:scaleX(1.0025);transform-origin:0 0;">Reject</div>
<svg style="position:absolute;left:1340px;top:156px;" width="11.5" height="8.5" viewBox="0 0 11.5 8.5"><polyline points="2.150000000000091,2.8499999999999943 5.400000000000091,6.349999999999994 8.650000000000091,2.8499999999999943" fill="none" stroke="#444" stroke-width="1.2"/></svg>
<svg style="position:absolute;left:1377px;top:88px;" width="22" height="24" viewBox="0 0 22 24"><path d="M1.5 1.5H9.5L14.5 6.5V19.5H1.5Z" fill="#fafafa" stroke="#444" stroke-width="1.3" stroke-linejoin="round"/><path d="M9.5 1.5V6.5H14.5" fill="none" stroke="#444" stroke-width="1.3"/><path d="M4.5 8h2M5.5 11.5h2" stroke="#e04848" stroke-width="1.4"/><rect x="8" y="12" width="12" height="8" fill="#f3f2f1"/><path d="M8.5 16h10M12 12.5l-3.5 3.5 3.5 3.5" fill="none" stroke="#1e88d6" stroke-width="1.4"/></svg>
<div id="t54" style="position:absolute;left:1399.02px;top:92.13px;font-size:14.5px;line-height:14.5px;color:#444;font-weight:400;font-family:'Liberation Sans', sans-serif;white-space:nowrap;transform:scaleX(0.9873);transform-origin:0 0;">Previous</div>
<svg style="position:absolute;left:1377px;top:117px;" width="22" height="24" viewBox="0 0 22 24"><path d="M1.5 1.5H9.5L14.5 6.5V19.5H1.5Z" fill="#fafafa" stroke="#444" stroke-width="1.3" stroke-linejoin="round"/><path d="M9.5 1.5V6.5H14.5" fill="none" stroke="#444" stroke-width="1.3"/><path d="M4.5 8h2M5.5 11.5h2" stroke="#e04848" stroke-width="1.4"/><rect x="8" y="12" width="12" height="8" fill="#f3f2f1"/><path d="M8.5 16h10M15 12.5l3.5 3.5-3.5 3.5" fill="none" stroke="#1e88d6" stroke-width="1.4"/></svg>
<div id="t55" style="position:absolute;left:1398.94px;top:121.33px;font-size:14.5px;line-height:14.5px;color:#444;font-weight:400;font-family:'Liberation Sans', sans-serif;white-space:nowrap;transform:scaleX(1.0414);transform-origin:0 0;">Next</div>
<div id="t56" style="position:absolute;left:1339.69px;top:184.77px;font-size:13.5px;line-height:13.5px;color:#444;font-weight:400;font-family:'Liberation Sans', sans-serif;white-space:nowrap;transform:scaleX(0.9189);transform-origin:0 0;">Changes</div>
<svg style="position:absolute;left:1497px;top:89px;" width="42" height="40" viewBox="0 0 42 40"><rect x="14.5" y="2.5" width="22.5" height="31" fill="#fafafa" stroke="#444" stroke-width="1.4"/><path d="M28 11h6M28 15.5h6M28 20h6" stroke="#777" stroke-width="1.3"/><rect x="3" y="6.5" width="22.5" height="30.5" fill="#fafafa" stroke="#2b7cd3" stroke-width="1.6"/><path d="M7 15.5h14M7 20h14M7 24.5h14" stroke="#777" stroke-width="1.4"/></svg>
<div id="t57" style="position:absolute;left:1484.95px;top:135.03px;font-size:14.5px;line-height:14.5px;color:#444;font-weight:400;font-family:'Liberation Sans', sans-serif;white-space:nowrap;transform:scaleX(1.0500);transform-origin:0 0;">Compare</div>
<svg style="position:absolute;left:1511px;top:156px;" width="11.5" height="8.5" viewBox="0 0 11.5 8.5"><polyline points="2.150000000000091,2.8499999999999943 5.400000000000091,6.349999999999994 8.650000000000091,2.8499999999999943" fill="none" stroke="#444" stroke-width="1.2"/></svg>
<div id="t58" style="position:absolute;left:1488.40px;top:184.77px;font-size:13.5px;line-height:13.5px;color:#444;font-weight:400;font-family:'Liberation Sans', sans-serif;white-space:nowrap;transform:scaleX(0.9889);transform-origin:0 0;">Compare</div>
<svg style="position:absolute;left:1587px;top:89px;" width="42" height="42" viewBox="0 0 42 42"><circle cx="14" cy="11.5" r="8.3" fill="#ededed" stroke="#b0b0b0" stroke-width="1.3"/><path d="M2.5 35 C3 25 8 21.5 14 21.5 C17 21.5 19.5 22.5 21 24" fill="#ededed" stroke="#b0b0b0" stroke-width="1.3"/><circle cx="28" cy="30" r="8.5" fill="#ededed" stroke="#b0b0b0" stroke-width="1.3"/><path d="M22 24 L34 36" stroke="#b0b0b0" stroke-width="1.3"/></svg>
<div id="t59" style="position:absolute;left:1585.93px;top:135.03px;font-size:14.5px;line-height:14.5px;color:#a6a6a6;font-weight:400;font-family:'Liberation Sans', sans-serif;white-space:nowrap;transform:scaleX(1.0735);transform-origin:0 0;">Block</div>
<div id="t60" style="position:absolute;left:1572.00px;top:155.03px;font-size:14.5px;line-height:14.5px;color:#a6a6a6;font-weight:400;font-family:'Liberation Sans', sans-serif;white-space:nowrap;transform:scaleX(1.0160);transform-origin:0 0;">Authors</div>
<svg style="position:absolute;left:1625px;top:156px;" width="11.5" height="8.5" viewBox="0 0 11.5 8.5"><polyline points="2.9500000000000455,2.8499999999999943 6.2000000000000455,6.349999999999994 9.450000000000045,2.8499999999999943" fill="none" stroke="#a6a6a6" stroke-width="1.2"/></svg>
<svg style="position:absolute;left:1652px;top:89px;" width="38" height="42" viewBox="0 0 38 42"><path d="M1.5 2.5H18.5L27.5 11.5V37.5H1.5Z" fill="#fafafa" stroke="#444" stroke-width="1.3" stroke-linejoin="round"/><path d="M18.5 2.5V11.5H27.5" fill="none" stroke="#444" stroke-width="1.3"/><path d="M22.5 26 V22 Q22.5 17 27 17 Q31.5 17 31.5 22 V26" fill="none" stroke="#e8822a" stroke-width="1.6"/><rect x="19" y="26" width="15.5" height="13.5" fill="#f8d37e" stroke="#e8822a" stroke-width="1.5"/></svg>
<div id="t61" style="position:absolute;left:1641.59px;top:135.03px;font-size:14.5px;line-height:14.5px;color:#444;font-weight:400;font-family:'Liberation Sans', sans-serif;white-space:nowrap;transform:scaleX(1.0104);transform-origin:0 0;">Restrict</div>
<div id="t62" style="position:absolute;left:1642.75px;top:155.03px;font-size:14.5px;line-height:14.5px;color:#444;font-weight:400;font-family:'Liberation Sans', sans-serif;white-space:nowrap;transform:scaleX(1.0628);transform-origin:0 0;">Editing</div>
<div id="t63" style="position:absolute;left:1610.03px;top:184.77px;font-size:13.5px;line-height:13.5px;color:#444;font-weight:400;font-family:'Liberation Sans', sans-serif;white-space:nowrap;transform:scaleX(0.9667);transform-origin:0 0;">Protect</div>
<svg style="position:absolute;left:1720px;top:89px;" width="40" height="42" viewBox="0 0 40 42"><path d="M2.5 2.5H31.5L2.5 31.5Z" fill="#fafafa" stroke="#444" stroke-width="1.5" stroke-linejoin="miter"/><path d="M16 26 C20 20 21 17 24.5 17.5 C26 18 24 22 27 22 C30 22 33 19 36 18" fill="none" stroke="#e8413a" stroke-width="1.5"/><path d="M2 36.5 C10 33 14 30 18 31 C20 32 19 35 22 35 C26 35 31 32 36 30.5" fill="none" stroke="#e8413a" stroke-width="1.5"/></svg>
<div id="t64" style="position:absolute;left:1723.51px;top:135.03px;font-size:14.5px;line-height:14.5px;color:#444;font-weight:400;font-family:'Liberation Sans', sans-serif;white-space:nowrap;transform:scaleX(1.1286);transform-origin:0 0;">Hide</div>
<div id="t65" style="position:absolute;left:1722.16px;top:155.03px;font-size:14.5px;line-height:14.5px;color:#444;font-weight:400;font-family:'Liberation Sans', sans-serif;white-space:nowrap;transform:scaleX(1.0389);transform-origin:0 0;">Ink</div>
<svg style="position:absolute;left:1744px;top:156px;" width="11.5" height="8.5" viewBox="0 0 11.5 8.5"><polyline points="2.75,2.8499999999999943 6.0,6.349999999999994 9.25,2.8499999999999943" fill="none" stroke="#444" stroke-width="1.2"/></svg>
<div id="t66" style="position:absolute;left:1730.64px;top:184.77px;font-size:13.5px;line-height:13.5px;color:#444;font-weight:400;font-family:'Liberation Sans', sans-serif;white-space:nowrap;transform:scaleX(0.9353);transform-origin:0 0;">Ink</div>
<svg style="position:absolute;left:1790px;top:89px;" width="44" height="40" viewBox="0 0 44 40"><rect x="10.5" y="2" width="30" height="35" rx="2" fill="#ca64ea"/><rect x="31" y="12" width="9.5" height="8" fill="#ae4bd5"/><rect x="31" y="20" width="9.5" height="9" fill="#9332bf"/><path d="M31 29h9.5v6a2 2 0 0 1-2 2H31z" fill="#7719aa"/><rect x="1.5" y="9.5" width="21" height="21" rx="2" fill="#7719aa"/><text x="5.5" y="26.5" font-family="Liberation Sans" font-weight="700" font-size="16.5" fill="#fff">N</text></svg>
<div id="t67" style="position:absolute;left:1789.18px;top:135.03px;font-size:14.5px;line-height:14.5px;color:#444;font-weight:400;font-family:'Liberation Sans', sans-serif;white-space:nowrap;transform:scaleX(1.0098);transform-origin:0 0;">Linked</div>
<div id="t68" style="position:absolute;left:1791.35px;top:155.03px;font-size:14.5px;line-height:14.5px;color:#444;font-weight:400;font-family:'Liberation Sans', sans-serif;white-space:nowrap;transform:scaleX(1.0486);transform-origin:0 0;">Notes</div>
<div id="t69" style="position:absolute;left:1784.40px;top:184.77px;font-size:13.5px;line-height:13.5px;color:#444;font-weight:400;font-family:'Liberation Sans', sans-serif;white-space:nowrap;transform:scaleX(0.9868);transform-origin:0 0;">OneNote</div>
<svg style="position:absolute;left:1894px;top:188px;" width="16" height="10" viewBox="0 0 16 10"><polyline points="1.5,8 7.5,2 13.5,8" fill="none" stroke="#444" stroke-width="1.3"/></svg>
<div style="position:absolute;left:448px;top:203px;width:1px;height:797px;background:#c8c8c8;"></div>
<div id="t70" style="position:absolute;left:25.54px;top:218.57px;font-size:26.5px;line-height:26.5px;color:#444;font-weight:400;font-family:'Liberation Sans', sans-serif;white-space:nowrap;transform:scaleX(1.0262);transform-origin:0 0;">Navigation</div>
<svg style="position:absolute;left:358px;top:221px;" width="24" height="16" viewBox="0 0 24 16"><polyline points="2.5,3.5 11.5,12.5 20.5,3.5" fill="none" stroke="#333" stroke-width="1.4"/></svg>
<svg style="position:absolute;left:412px;top:220px;" width="20" height="20" viewBox="0 0 20 20"><path d="M2.5 2.5L15.5 15.5M15.5 2.5L2.5 15.5" stroke="#222" stroke-width="1.4"/></svg>
<div style="position:absolute;left:26px;top:267px;width:402px;height:30px;background:#fff;border:1px solid #b3b3b3;box-sizing:border-box;"></div>
<div id="t71" style="position:absolute;left:33.54px;top:273.13px;font-size:15.5px;line-height:15.5px;color:#666;font-weight:400;font-family:'Liberation Sans', sans-serif;white-space:nowrap;transform:scaleX(0.9463);transform-origin:0 0;">Search document</div>
<svg style="position:absolute;left:394px;top:272px;" width="20" height="20" viewBox="0 0 20 20"><circle cx="11.5" cy="7.5" r="4.8" fill="none" stroke="#2b579a" stroke-width="2"/><path d="M8.2 11 L3 16.2" stroke="#2b579a" stroke-width="2.4" stroke-linecap="round"/></svg>
<svg style="position:absolute;left:414px;top:278px;" width="12" height="9" viewBox="0 0 12 9"><polyline points="2.5,2.1999999999999886 6.0,6.199999999999989 9.5,2.1999999999999886" fill="none" stroke="#333" stroke-width="1.2"/></svg>
<div id="t72" style="position:absolute;left:26.04px;top:320.13px;font-size:15.5px;line-height:15.5px;color:#2b579a;font-weight:700;font-family:'Liberation Sans', sans-serif;white-space:nowrap;transform:scaleX(0.9559);transform-origin:0 0;">Headings</div>
<div style="position:absolute;left:26px;top:345px;width:67px;height:4px;background:#2b579a;"></div>
<div id="t73" style="position:absolute;left:123.59px;top:320.13px;font-size:15.5px;line-height:15.5px;color:#444;font-weight:400;font-family:'Liberation Sans', sans-serif;white-space:nowrap;transform:scaleX(0.8779);transform-origin:0 0;">Pages</div>
<div id="t74" style="position:absolute;left:195.56px;top:320.13px;font-size:15.5px;line-height:15.5px;color:#444;font-weight:400;font-family:'Liberation Sans', sans-serif;white-space:nowrap;transform:scaleX(0.9150);transform-origin:0 0;">Results</div>
<div style="position:absolute;left:46px;top:871px;width:366px;height:26px;background:#c5d7f1;"></div>
<div id="t75" style="position:absolute;left:52.08px;top:363.58px;font-size:15.5px;line-height:15.5px;color:#444;font-weight:400;font-family:'Liberation Sans', sans-serif;white-space:nowrap;transform:scaleX(0.8333);transform-origin:0 0;">4.</div>
<div id="t76" style="position:absolute;left:70.42px;top:363.58px;font-size:15.5px;line-height:15.5px;color:#444;font-weight:400;font-family:'Liberation Sans', sans-serif;white-space:nowrap;transform:scaleX(0.9728);transform-origin:0 0;">Initial background questions</div>
<div id="t77" style="position:absolute;left:51.14px;top:390.58px;font-size:15.5px;line-height:15.5px;color:#444;font-weight:400;font-family:'Liberation Sans', sans-serif;white-space:nowrap;transform:scaleX(0.9091);transform-origin:0 0;">5.</div>
<div id="t78" style="position:absolute;left:70.44px;top:390.58px;font-size:15.5px;line-height:15.5px;color:#444;font-weight:400;font-family:'Liberation Sans', sans-serif;white-space:nowrap;transform:scaleX(0.9570);transform-origin:0 0;">Foodborne illness</div>
<div id="t79" style="position:absolute;left:51.14px;top:417.58px;font-size:15.5px;line-height:15.5px;color:#444;font-weight:400;font-family:'Liberation Sans', sans-serif;white-space:nowrap;transform:scaleX(0.9091);transform-origin:0 0;">6.</div>
<div id="t80" style="position:absolute;left:70.43px;top:417.58px;font-size:15.5px;line-height:15.5px;color:#444;font-weight:400;font-family:'Liberation Sans', sans-serif;white-space:nowrap;transform:scaleX(0.9703);transform-origin:0 0;">Complications and Long-term Outcomes</div>
<div id="t81" style="position:absolute;left:51.14px;top:444.58px;font-size:15.5px;line-height:15.5px;color:#444;font-weight:400;font-family:'Liberation Sans', sans-serif;white-space:nowrap;transform:scaleX(0.9091);transform-origin:0 0;">7.</div>
<div id="t82" style="position:absolute;left:70.42px;top:444.58px;font-size:15.5px;line-height:15.5px;color:#444;font-weight:400;font-family:'Liberation Sans', sans-serif;white-space:nowrap;transform:scaleX(0.9778);transform-origin:0 0;">Choices about long-term impacts</div>
<div id="t83" style="position:absolute;left:51.14px;top:471.58px;font-size:15.5px;line-height:15.5px;color:#444;font-weight:400;font-family:'Liberation Sans', sans-serif;white-space:nowrap;transform:scaleX(0.9091);transform-origin:0 0;">8.</div>
<div id="t84" style="position:absolute;left:70.45px;top:471.58px;font-size:15.5px;line-height:15.5px;color:#444;font-weight:400;font-family:'Liberation Sans', sans-serif;white-space:nowrap;transform:scaleX(0.9490);transform-origin:0 0;">Understanding risk (1)</div>
<div id="t85" style="position:absolute;left:51.14px;top:498.58px;font-size:15.5px;line-height:15.5px;color:#444;font-weight:400;font-family:'Liberation Sans', sans-serif;white-space:nowrap;transform:scaleX(0.9091);transform-origin:0 0;">9.</div>
<div id="t86" style="position:absolute;left:70.45px;top:498.58px;font-size:15.5px;line-height:15.5px;color:#444;font-weight:400;font-family:'Liberation Sans', sans-serif;white-space:nowrap;transform:scaleX(0.9490);transform-origin:0 0;">Understanding risk (2)</div>
<div id="t87" style="position:absolute;left:52.27px;top:525.58px;font-size:15.5px;line-height:15.5px;color:#444;font-weight:400;font-family:'Liberation Sans', sans-serif;white-space:nowrap;transform:scaleX(0.9211);transform-origin:0 0;">10.</div>
<div id="t88" style="position:absolute;left:78.63px;top:525.58px;font-size:15.5px;line-height:15.5px;color:#444;font-weight:400;font-family:'Liberation Sans', sans-serif;white-space:nowrap;transform:scaleX(0.9522);transform-origin:0 0;">Changes out of 100</div>
<div id="t89" style="position:absolute;left:52.22px;top:552.58px;font-size:15.5px;line-height:15.5px;color:#444;font-weight:400;font-family:'Liberation Sans', sans-serif;white-space:nowrap;transform:scaleX(0.9722);transform-origin:0 0;">11.</div>
<div id="t90" style="position:absolute;left:78.63px;top:552.58px;font-size:15.5px;line-height:15.5px;color:#444;font-weight:400;font-family:'Liberation Sans', sans-serif;white-space:nowrap;transform:scaleX(0.9514);transform-origin:0 0;">Changes out of 1000</div>
<div id="t91" style="position:absolute;left:52.27px;top:579.58px;font-size:15.5px;line-height:15.5px;color:#444;font-weight:400;font-family:'Liberation Sans', sans-serif;white-space:nowrap;transform:scaleX(0.9211);transform-origin:0 0;">12.</div>
<div id="t92" style="position:absolute;left:78.63px;top:579.58px;font-size:15.5px;line-height:15.5px;color:#444;font-weight:400;font-family:'Liberation Sans', sans-serif;white-space:nowrap;transform:scaleX(0.9486);transform-origin:0 0;">Comparing risks using these figures</div>
<div id="t93" style="position:absolute;left:52.27px;top:606.58px;font-size:15.5px;line-height:15.5px;color:#444;font-weight:400;font-family:'Liberation Sans', sans-serif;white-space:nowrap;transform:scaleX(0.9211);transform-origin:0 0;">13.</div>
<div id="t94" style="position:absolute;left:78.61px;top:606.58px;font-size:15.5px;line-height:15.5px;color:#444;font-weight:400;font-family:'Liberation Sans', sans-serif;white-space:nowrap;transform:scaleX(0.9809);transform-origin:0 0;">Choices about long-term impacts</div>
<div id="t95" style="position:absolute;left:52.27px;top:633.58px;font-size:15.5px;line-height:15.5px;color:#444;font-weight:400;font-family:'Liberation Sans', sans-serif;white-space:nowrap;transform:scaleX(0.9211);transform-origin:0 0;">14.</div>
<div id="t96" style="position:absolute;left:78.61px;top:633.58px;font-size:15.5px;line-height:15.5px;color:#444;font-weight:400;font-family:'Liberation Sans', sans-serif;white-space:nowrap;transform:scaleX(0.9788);transform-origin:0 0;">Remember your budget!</div>
<div id="t97" style="position:absolute;left:52.27px;top:660.58px;font-size:15.5px;line-height:15.5px;color:#444;font-weight:400;font-family:'Liberation Sans', sans-serif;white-space:nowrap;transform:scaleX(0.9211);transform-origin:0 0;">15.</div>
<div id="t98" style="position:absolute;left:78.63px;top:660.58px;font-size:15.5px;line-height:15.5px;color:#444;font-weight:400;font-family:'Liberation Sans', sans-serif;white-space:nowrap;transform:scaleX(0.9468);transform-origin:0 0;">Choice 1 (the risk)</div>
<div id="t99" style="position:absolute;left:52.27px;top:687.58px;font-size:15.5px;line-height:15.5px;color:#444;font-weight:400;font-family:'Liberation Sans', sans-serif;white-space:nowrap;transform:scaleX(0.9211);transform-origin:0 0;">16.</div>
<div id="t100" style="position:absolute;left:78.62px;top:687.58px;font-size:15.5px;line-height:15.5px;color:#444;font-weight:400;font-family:'Liberation Sans', sans-serif;white-space:nowrap;transform:scaleX(0.9608);transform-origin:0 0;">Choice 1b (the choice)</div>
<div id="t101" style="position:absolute;left:52.27px;top:714.58px;font-size:15.5px;line-height:15.5px;color:#444;font-weight:400;font-family:'Liberation Sans', sans-serif;white-space:nowrap;transform:scaleX(0.9211);transform-origin:0 0;">17.</div>
<div id="t102" style="position:absolute;left:78.63px;top:714.58px;font-size:15.5px;line-height:15.5px;color:#444;font-weight:400;font-family:'Liberation Sans', sans-serif;white-space:nowrap;transform:scaleX(0.9468);transform-origin:0 0;">Choice 2 (the risk)</div>
<div id="t103" style="position:absolute;left:52.27px;top:741.58px;font-size:15.5px;line-height:15.5px;color:#444;font-weight:400;font-family:'Liberation Sans', sans-serif;white-space:nowrap;transform:scaleX(0.9211);transform-origin:0 0;">18.</div>
<div id="t104" style="position:absolute;left:78.62px;top:741.58px;font-size:15.5px;line-height:15.5px;color:#444;font-weight:400;font-family:'Liberation Sans', sans-serif;white-space:nowrap;transform:scaleX(0.9608);transform-origin:0 0;">Choice 2b (the choice)</div>
<div id="t105" style="position:absolute;left:52.27px;top:768.58px;font-size:15.5px;line-height:15.5px;color:#444;font-weight:400;font-family:'Liberation Sans', sans-serif;white-space:nowrap;transform:scaleX(0.9211);transform-origin:0 0;">19.</div>
<div id="t106" style="position:absolute;left:79.58px;top:768.58px;font-size:15.5px;line-height:15.5px;color:#444;font-weight:400;font-family:'Liberation Sans', sans-serif;white-space:nowrap;transform:scaleX(0.9550);transform-origin:0 0;">An alternative way to rate illness severity</div>
<div id="t107" style="position:absolute;left:52.27px;top:795.58px;font-size:15.5px;line-height:15.5px;color:#444;font-weight:400;font-family:'Liberation Sans', sans-serif;white-space:nowrap;transform:scaleX(0.9211);transform-origin:0 0;">20.</div>
<div id="t108" style="position:absolute;left:78.63px;top:795.58px;font-size:15.5px;line-height:15.5px;color:#444;font-weight:400;font-family:'Liberation Sans', sans-serif;white-space:nowrap;transform:scaleX(0.9599);transform-origin:0 0;">Rating your current health</div>
<div id="t109" style="position:absolute;left:52.27px;top:822.58px;font-size:15.5px;line-height:15.5px;color:#444;font-weight:400;font-family:'Liberation Sans', sans-serif;white-space:nowrap;transform:scaleX(0.9211);transform-origin:0 0;">21.</div>
<div id="t110" style="position:absolute;left:78.63px;top:822.58px;font-size:15.5px;line-height:15.5px;color:#444;font-weight:400;font-family:'Liberation Sans', sans-serif;white-space:nowrap;transform:scaleX(0.9468);transform-origin:0 0;">Choice 3 (the risk)</div>
<div id="t111" style="position:absolute;left:52.27px;top:849.58px;font-size:15.5px;line-height:15.5px;color:#444;font-weight:400;font-family:'Liberation Sans', sans-serif;white-space:nowrap;transform:scaleX(0.9211);transform-origin:0 0;">22.</div>
<div id="t112" style="position:absolute;left:78.62px;top:849.58px;font-size:15.5px;line-height:15.5px;color:#444;font-weight:400;font-family:'Liberation Sans', sans-serif;white-space:nowrap;transform:scaleX(0.9608);transform-origin:0 0;">Choice 3b (the choice)</div>
<div id="t113" style="position:absolute;left:52.27px;top:876.58px;font-size:15.5px;line-height:15.5px;color:#444;font-weight:400;font-family:'Liberation Sans', sans-serif;white-space:nowrap;transform:scaleX(0.9211);transform-origin:0 0;">23.</div>
<div id="t114" style="position:absolute;left:78.63px;top:876.58px;font-size:15.5px;line-height:15.5px;color:#444;font-weight:400;font-family:'Liberation Sans', sans-serif;white-space:nowrap;transform:scaleX(0.9468);transform-origin:0 0;">Choice 4 (the risk)</div>
<div id="t115" style="position:absolute;left:52.27px;top:903.58px;font-size:15.5px;line-height:15.5px;color:#444;font-weight:400;font-family:'Liberation Sans', sans-serif;white-space:nowrap;transform:scaleX(0.9211);transform-origin:0 0;">24.</div>
<div id="t116" style="position:absolute;left:78.62px;top:903.58px;font-size:15.5px;line-height:15.5px;color:#444;font-weight:400;font-family:'Liberation Sans', sans-serif;white-space:nowrap;transform:scaleX(0.9608);transform-origin:0 0;">Choice 4b (the choice)</div>
<div id="t117" style="position:absolute;left:52.27px;top:930.58px;font-size:15.5px;line-height:15.5px;color:#444;font-weight:400;font-family:'Liberation Sans', sans-serif;white-space:nowrap;transform:scaleX(0.9211);transform-origin:0 0;">25.</div>
<div id="t118" style="position:absolute;left:78.63px;top:930.58px;font-size:15.5px;line-height:15.5px;color:#444;font-weight:400;font-family:'Liberation Sans', sans-serif;white-space:nowrap;transform:scaleX(0.9599);transform-origin:0 0;">Debriefing Questions about your survey experie...</div>
<div id="t119" style="position:absolute;left:52.27px;top:957.58px;font-size:15.5px;line-height:15.5px;color:#444;font-weight:400;font-family:'Liberation Sans', sans-serif;white-space:nowrap;transform:scaleX(0.9211);transform-origin:0 0;">26.</div>
<div id="t120" style="position:absolute;left:78.63px;top:957.58px;font-size:15.5px;line-height:15.5px;color:#444;font-weight:400;font-family:'Liberation Sans', sans-serif;white-space:nowrap;transform:scaleX(0.9515);transform-origin:0 0;">General health questions</div>
<div style="position:absolute;left:450px;top:203px;width:28px;height:25px;background:#d6d6d6;"></div>
<div style="position:absolute;left:452px;top:206px;width:21px;height:19px;background:#fafafa;"></div>
<svg style="position:absolute;left:458px;top:211px;" width="10" height="10" viewBox="0 0 10 10"><path d="M1.5 0.5V7.5H8.5" fill="none" stroke="#777" stroke-width="2.4"/></svg>
<div style="position:absolute;left:454px;top:232px;width:17px;height:46px;background:#c6c6c6;"></div>
<div style="position:absolute;left:454px;top:278px;width:17px;height:722px;background:#ffffff;"></div>
<svg style="position:absolute;left:0;top:0" width="1920" height="1080" shape-rendering="crispEdges"><rect x="461" y="236" width="6" height="1" fill="#333"/><rect x="463" y="246" width="2" height="1" fill="#333"/><rect x="463" y="256" width="2" height="1" fill="#333"/><rect x="463" y="266" width="2" height="1" fill="#333"/><rect x="463" y="287" width="2" height="1" fill="#333"/><rect x="463" y="297" width="2" height="1" fill="#333"/><rect x="463" y="307" width="2" height="1" fill="#333"/><rect x="461" y="318" width="6" height="1" fill="#333"/><rect x="463" y="328" width="2" height="1" fill="#333"/><rect x="463" y="338" width="2" height="1" fill="#333"/><rect x="463" y="348" width="2" height="1" fill="#333"/><rect x="463" y="369" width="2" height="1" fill="#333"/><rect x="463" y="379" width="2" height="1" fill="#333"/><rect x="463" y="389" width="2" height="1" fill="#333"/><rect x="461" y="399" width="6" height="1" fill="#333"/><rect x="463" y="410" width="2" height="1" fill="#333"/><rect x="463" y="420" width="2" height="1" fill="#333"/><rect x="463" y="430" width="2" height="1" fill="#333"/><rect x="463" y="451" width="2" height="1" fill="#333"/><rect x="463" y="461" width="2" height="1" fill="#333"/><rect x="463" y="471" width="2" height="1" fill="#333"/><rect x="461" y="481" width="6" height="1" fill="#333"/><rect x="463" y="492" width="2" height="1" fill="#333"/><rect x="463" y="502" width="2" height="1" fill="#333"/><rect x="463" y="512" width="2" height="1" fill="#333"/><rect x="463" y="533" width="2" height="1" fill="#333"/><rect x="463" y="543" width="2" height="1" fill="#333"/><rect x="463" y="553" width="2" height="1" fill="#333"/><rect x="461" y="563" width="6" height="1" fill="#333"/><rect x="463" y="573" width="2" height="1" fill="#333"/><rect x="463" y="584" width="2" height="1" fill="#333"/><rect x="463" y="594" width="2" height="1" fill="#333"/><rect x="463" y="614" width="2" height="1" fill="#333"/><rect x="463" y="625" width="2" height="1" fill="#333"/><rect x="463" y="635" width="2" height="1" fill="#333"/><rect x="461" y="645" width="6" height="1" fill="#333"/><rect x="463" y="655" width="2" height="1" fill="#333"/><rect x="463" y="666" width="2" height="1" fill="#333"/><rect x="463" y="676" width="2" height="1" fill="#333"/><rect x="463" y="696" width="2" height="1" fill="#333"/><rect x="463" y="707" width="2" height="1" fill="#333"/><rect x="463" y="717" width="2" height="1" fill="#333"/><rect x="461" y="727" width="6" height="1" fill="#333"/><rect x="463" y="737" width="2" height="1" fill="#333"/><rect x="463" y="748" width="2" height="1" fill="#333"/><rect x="463" y="758" width="2" height="1" fill="#333"/><rect x="463" y="778" width="2" height="1" fill="#333"/><rect x="463" y="788" width="2" height="1" fill="#333"/><rect x="463" y="799" width="2" height="1" fill="#333"/><rect x="461" y="809" width="6" height="1" fill="#333"/><rect x="463" y="819" width="2" height="1" fill="#333"/><rect x="463" y="829" width="2" height="1" fill="#333"/><rect x="463" y="840" width="2" height="1" fill="#333"/><rect x="463" y="860" width="2" height="1" fill="#333"/><rect x="463" y="870" width="2" height="1" fill="#333"/><rect x="463" y="881" width="2" height="1" fill="#333"/><rect x="461" y="891" width="6" height="1" fill="#333"/><rect x="463" y="901" width="2" height="1" fill="#333"/><rect x="463" y="911" width="2" height="1" fill="#333"/><rect x="463" y="922" width="2" height="1" fill="#333"/><rect x="463" y="942" width="2" height="1" fill="#333"/><rect x="463" y="952" width="2" height="1" fill="#333"/><rect x="463" y="963" width="2" height="1" fill="#333"/><rect x="461" y="973" width="6" height="1" fill="#333"/><rect x="463" y="983" width="2" height="1" fill="#333"/></svg>
<div style="position:absolute;left:454px;top:353.40px;width:20px;height:12px;line-height:12px;text-align:center;font-size:12px;color:#333;transform:rotate(-90deg);">1</div>
<div style="position:absolute;left:454px;top:435.30px;width:20px;height:12px;line-height:12px;text-align:center;font-size:12px;color:#333;transform:rotate(-90deg);">2</div>
<div style="position:absolute;left:454px;top:517.20px;width:20px;height:12px;line-height:12px;text-align:center;font-size:12px;color:#333;transform:rotate(-90deg);">3</div>
<div style="position:absolute;left:454px;top:599.10px;width:20px;height:12px;line-height:12px;text-align:center;font-size:12px;color:#333;transform:rotate(-90deg);">4</div>
<div style="position:absolute;left:454px;top:681.00px;width:20px;height:12px;line-height:12px;text-align:center;font-size:12px;color:#333;transform:rotate(-90deg);">5</div>
<div style="position:absolute;left:454px;top:762.90px;width:20px;height:12px;line-height:12px;text-align:center;font-size:12px;color:#333;transform:rotate(-90deg);">6</div>
<div style="position:absolute;left:454px;top:844.80px;width:20px;height:12px;line-height:12px;text-align:center;font-size:12px;color:#333;transform:rotate(-90deg);">7</div>
<div style="position:absolute;left:454px;top:926.70px;width:20px;height:12px;line-height:12px;text-align:center;font-size:12px;color:#333;transform:rotate(-90deg);">8</div>
<div style="position:absolute;left:839px;top:207px;width:697px;height:16px;background:#c6c6c6;"></div>
<div style="position:absolute;left:922px;top:207px;width:532px;height:16px;background:#ffffff;"></div>
<svg style="position:absolute;left:0;top:0" width="1920" height="1080" shape-rendering="crispEdges"><rect x="849" y="215" width="1" height="2" fill="#333"/><rect x="859" y="215" width="1" height="2" fill="#333"/><rect x="870" y="215" width="1" height="2" fill="#333"/><rect x="880" y="213" width="1" height="6" fill="#333"/><rect x="890" y="215" width="1" height="2" fill="#333"/><rect x="900" y="215" width="1" height="2" fill="#333"/><rect x="910" y="215" width="1" height="2" fill="#333"/><rect x="931" y="215" width="1" height="2" fill="#333"/><rect x="941" y="215" width="1" height="2" fill="#333"/><rect x="951" y="215" width="1" height="2" fill="#333"/><rect x="962" y="213" width="1" height="6" fill="#333"/><rect x="972" y="215" width="1" height="2" fill="#333"/><rect x="982" y="215" width="1" height="2" fill="#333"/><rect x="992" y="215" width="1" height="2" fill="#333"/><rect x="1013" y="215" width="1" height="2" fill="#333"/><rect x="1023" y="215" width="1" height="2" fill="#333"/><rect x="1033" y="215" width="1" height="2" fill="#333"/><rect x="1044" y="213" width="1" height="6" fill="#333"/><rect x="1054" y="215" width="1" height="2" fill="#333"/><rect x="1064" y="215" width="1" height="2" fill="#333"/><rect x="1074" y="215" width="1" height="2" fill="#333"/><rect x="1095" y="215" width="1" height="2" fill="#333"/><rect x="1105" y="215" width="1" height="2" fill="#333"/><rect x="1115" y="215" width="1" height="2" fill="#333"/><rect x="1125" y="213" width="1" height="6" fill="#333"/><rect x="1136" y="215" width="1" height="2" fill="#333"/><rect x="1146" y="215" width="1" height="2" fill="#333"/><rect x="1156" y="215" width="1" height="2" fill="#333"/><rect x="1177" y="215" width="1" height="2" fill="#333"/><rect x="1187" y="215" width="1" height="2" fill="#333"/><rect x="1197" y="215" width="1" height="2" fill="#333"/><rect x="1207" y="213" width="1" height="6" fill="#333"/><rect x="1218" y="215" width="1" height="2" fill="#333"/><rect x="1228" y="215" width="1" height="2" fill="#333"/><rect x="1238" y="215" width="1" height="2" fill="#333"/><rect x="1259" y="215" width="1" height="2" fill="#333"/><rect x="1269" y="215" width="1" height="2" fill="#333"/><rect x="1279" y="215" width="1" height="2" fill="#333"/><rect x="1289" y="213" width="1" height="6" fill="#333"/><rect x="1299" y="215" width="1" height="2" fill="#333"/><rect x="1310" y="215" width="1" height="2" fill="#333"/><rect x="1320" y="215" width="1" height="2" fill="#333"/><rect x="1340" y="215" width="1" height="2" fill="#333"/><rect x="1351" y="215" width="1" height="2" fill="#333"/><rect x="1361" y="215" width="1" height="2" fill="#333"/><rect x="1371" y="213" width="1" height="6" fill="#333"/><rect x="1381" y="215" width="1" height="2" fill="#333"/><rect x="1392" y="215" width="1" height="2" fill="#333"/><rect x="1402" y="215" width="1" height="2" fill="#333"/><rect x="1422" y="215" width="1" height="2" fill="#333"/><rect x="1433" y="215" width="1" height="2" fill="#333"/><rect x="1443" y="215" width="1" height="2" fill="#333"/><rect x="1453" y="213" width="1" height="6" fill="#333"/><rect x="1463" y="215" width="1" height="2" fill="#333"/><rect x="1474" y="215" width="1" height="2" fill="#333"/><rect x="1484" y="215" width="1" height="2" fill="#333"/><rect x="1504" y="215" width="1" height="2" fill="#333"/><rect x="1514" y="215" width="1" height="2" fill="#333"/><rect x="1525" y="215" width="1" height="2" fill="#333"/></svg>
<div style="position:absolute;left:829.70px;top:209.5px;width:20px;height:12px;line-height:12px;text-align:center;font-size:12px;color:#333;">1</div>
<div style="position:absolute;left:993.50px;top:209.5px;width:20px;height:12px;line-height:12px;text-align:center;font-size:12px;color:#333;">1</div>
<div style="position:absolute;left:1075.40px;top:209.5px;width:20px;height:12px;line-height:12px;text-align:center;font-size:12px;color:#333;">2</div>
<div style="position:absolute;left:1157.30px;top:209.5px;width:20px;height:12px;line-height:12px;text-align:center;font-size:12px;color:#333;">3</div>
<div style="position:absolute;left:1239.20px;top:209.5px;width:20px;height:12px;line-height:12px;text-align:center;font-size:12px;color:#333;">4</div>
<div style="position:absolute;left:1321.10px;top:209.5px;width:20px;height:12px;line-height:12px;text-align:center;font-size:12px;color:#333;">5</div>
<div style="position:absolute;left:1403.00px;top:209.5px;width:20px;height:12px;line-height:12px;text-align:center;font-size:12px;color:#333;">6</div>
<div style="position:absolute;left:1484.90px;top:209.5px;width:20px;height:12px;line-height:12px;text-align:center;font-size:12px;color:#333;">7</div>
<svg style="position:absolute;left:915px;top:203px;" width="14" height="30" viewBox="0 0 14 30"><path d="M1.5 1.5H11.5V5L6.5 10L1.5 5Z" fill="#fff" stroke="#777" stroke-width="1"/><path d="M6.5 11L11.5 16V21.5H1.5V16Z" fill="#fff" stroke="#777" stroke-width="1"/><rect x="1.5" y="21.5" width="10" height="6.5" fill="#fff" stroke="#777" stroke-width="1"/></svg>
<svg style="position:absolute;left:1448px;top:215px;" width="14" height="12" viewBox="0 0 14 12"><path d="M6.5 1.5L11.5 6.5V10.5H1.5V6.5Z" fill="#fff" stroke="#777" stroke-width="1"/></svg>
<div style="position:absolute;left:840px;top:232px;width:696px;height:768px;background:#ffffff;border-left:1px solid #c6c6c6;border-right:1px solid #d0d0d0;box-sizing:border-box;"></div>
<div style="position:absolute;left:1898px;top:234px;width:21px;height:766px;background:#f0f0f0;"></div>
<svg style="position:absolute;left:1899px;top:234px;" width="19" height="19" viewBox="0 0 19 19"><rect x="0.5" y="0.5" width="18" height="18" fill="#fff" stroke="#888"/><path d="M5 11.5H14L9.5 6.5Z" fill="#222"/></svg>
<svg style="position:absolute;left:1899px;top:780px;" width="19" height="21" viewBox="0 0 19 21"><rect x="0.5" y="0.5" width="18" height="20" fill="#fff" stroke="#888"/></svg>
<svg style="position:absolute;left:1899px;top:979px;" width="19" height="19" viewBox="0 0 19 19"><rect x="0.5" y="0.5" width="18" height="18" fill="#fff" stroke="#888"/><path d="M5.5 7H13.5L9.5 11.5Z" fill="#222"/></svg>
<div id="t121" style="position:absolute;left:1341.00px;top:238.49px;font-size:11px;line-height:11px;color:#7f7f7f;font-weight:400;font-family:'Liberation Sans', sans-serif;white-space:nowrap;transform:scaleX(1.0500);transform-origin:0 0;">OMB Control Number:</div>
<div id="t122" style="position:absolute;left:1104.78px;top:281.30px;font-size:15px;line-height:15px;color:#000;font-weight:700;font-family:'Liberation Sans', sans-serif;white-space:nowrap;transform:scaleX(1.0850);transform-origin:0 0;">23.</div>
<div id="t123" style="position:absolute;left:1135.92px;top:281.30px;font-size:15px;line-height:15px;color:#000;font-weight:700;font-family:'Liberation Sans', sans-serif;white-space:nowrap;transform:scaleX(1.0523);transform-origin:0 0;">Choice 4 (the risk)</div>
<div id="t124" style="position:absolute;left:921.11px;top:343.14px;font-size:12px;line-height:12px;color:#000;font-weight:700;font-family:'Liberation Sans', sans-serif;white-space:nowrap;transform:scaleX(0.9256);transform-origin:0 0;">Imagine that you have two options:</div>
<div id="t125" style="position:absolute;left:922.02px;top:368.24px;font-size:12px;line-height:12px;color:#000;font-weight:400;font-family:'Liberation Sans', sans-serif;white-space:nowrap;transform:scaleX(0.9502);transform-origin:0 0;"><b>Option A</b> involves a period of long-term illness caused by a foodborne illness.</div>
<div id="t126" style="position:absolute;left:922.02px;top:394.34px;font-size:12px;line-height:12px;color:#000;font-weight:400;font-family:'Liberation Sans', sans-serif;white-space:nowrap;transform:scaleX(0.9630);transform-origin:0 0;"><b>Option B</b> involves a period of current health, but there is a cost to keeping your current health.</div>
<div id="t127" style="position:absolute;left:922.03px;top:420.24px;font-size:12px;line-height:12px;color:#000;font-weight:400;font-family:'Liberation Sans', sans-serif;white-space:nowrap;transform:scaleX(0.9492);transform-origin:0 0;">These figures represent the chances posed in Option A and Option B.</div>
<div id="t128" style="position:absolute;left:996.37px;top:453.44px;font-size:12px;line-height:12px;color:#000;font-weight:700;font-family:'Liberation Sans', sans-serif;white-space:nowrap;transform:scaleX(0.9280);transform-origin:0 0;">Option A</div>
<div id="t129" style="position:absolute;left:1265.23px;top:450.04px;font-size:12px;line-height:12px;color:#000;font-weight:700;font-family:'Liberation Sans', sans-serif;white-space:nowrap;transform:scaleX(0.9080);transform-origin:0 0;">Option B</div>
<div style="position:absolute;left:926px;top:473px;width:187px;height:97px;background:#f2f2f2;"></div>
<div style="position:absolute;left:1196px;top:470px;width:187px;height:98px;background:#f2f2f2;"></div>
<div id="t130" style="position:absolute;left:942.40px;top:478.74px;font-size:12px;line-height:12px;color:#000;font-weight:400;font-family:'Liberation Sans', sans-serif;white-space:nowrap;transform:scaleX(0.9454);transform-origin:0 0;">Chances of having a long-term</div>
<div id="t131" style="position:absolute;left:960.60px;top:494.84px;font-size:12px;line-height:12px;color:#000;font-weight:400;font-family:'Liberation Sans', sans-serif;white-space:nowrap;transform:scaleX(0.9890);transform-origin:0 0;">health outcome after a</div>
<div id="t132" style="position:absolute;left:975.79px;top:511.64px;font-size:12px;line-height:12px;color:#000;font-weight:400;font-family:'Liberation Sans', sans-serif;white-space:nowrap;transform:scaleX(0.9689);transform-origin:0 0;">foodborne illness</div>
<div id="t133" style="position:absolute;left:980.41px;top:527.34px;font-size:12px;line-height:12px;color:#000;font-weight:700;font-family:'Liberation Sans', sans-serif;white-space:nowrap;transform:scaleX(0.9422);transform-origin:0 0;">67 out of 1,000</div>
<div id="t134" style="position:absolute;left:1211.22px;top:476.74px;font-size:12px;line-height:12px;color:#000;font-weight:400;font-family:'Liberation Sans', sans-serif;white-space:nowrap;transform:scaleX(0.9436);transform-origin:0 0;">Chances of having a long-term</div>
<div id="t135" style="position:absolute;left:1229.80px;top:492.84px;font-size:12px;line-height:12px;color:#000;font-weight:400;font-family:'Liberation Sans', sans-serif;white-space:nowrap;transform:scaleX(0.9890);transform-origin:0 0;">health outcome after a</div>
<div id="t136" style="position:absolute;left:1245.00px;top:509.64px;font-size:12px;line-height:12px;color:#000;font-weight:400;font-family:'Liberation Sans', sans-serif;white-space:nowrap;transform:scaleX(0.9689);transform-origin:0 0;">foodborne illness</div>
<div id="t137" style="position:absolute;left:1253.00px;top:525.74px;font-size:12px;line-height:12px;color:#000;font-weight:700;font-family:'Liberation Sans', sans-serif;white-space:nowrap;transform:scaleX(0.9421);transform-origin:0 0;">0 out of 1,000</div>
<svg style="position:absolute;left:0;top:0" width="1920" height="1080"><defs><pattern id="pb" x="923" y="589" width="5.595" height="10.73" patternUnits="userSpaceOnUse"><ellipse cx="2.45" cy="1.15" rx="0.8" ry="1.1" fill="#4472c4" opacity="0.9"/><path d="M1.2 2.3 H3.7 L4.8 5.0 L3.8 5.4 V6 H1.1 V5.4 L0.1 5.0 Z" fill="#4472c4" opacity="0.92"/><rect x="1.15" y="6" width="2.6" height="3.8" fill="#4472c4" opacity="0.62"/></pattern><pattern id="po" x="923" y="589" width="5.595" height="10.73" patternUnits="userSpaceOnUse"><ellipse cx="2.45" cy="1.15" rx="0.8" ry="1.1" fill="#ed7d31" opacity="0.9"/><path d="M1.2 2.3 H3.7 L4.8 5.0 L3.8 5.4 V6 H1.1 V5.4 L0.1 5.0 Z" fill="#ed7d31" opacity="0.92"/><rect x="1.15" y="6" width="2.6" height="3.8" fill="#ed7d31" opacity="0.62"/></pattern><pattern id="pb2" x="1189.6" y="588.2" width="5.595" height="10.73" patternUnits="userSpaceOnUse"><ellipse cx="2.45" cy="1.15" rx="0.8" ry="1.1" fill="#4472c4" opacity="0.9"/><path d="M1.2 2.3 H3.7 L4.8 5.0 L3.8 5.4 V6 H1.1 V5.4 L0.1 5.0 Z" fill="#4472c4" opacity="0.92"/><rect x="1.15" y="6" width="2.6" height="3.8" fill="#4472c4" opacity="0.62"/></pattern></defs><rect x="923" y="589" width="222" height="268.25" fill="url(#pb)"/><rect x="923" y="589" width="222" height="10.73" fill="#fff"/><rect x="923" y="589" width="222" height="10.73" fill="url(#po)"/><rect x="923" y="599.73" width="151.06" height="10.73" fill="#fff"/><rect x="923" y="599.73" width="151.06" height="10.73" fill="url(#po)"/><rect x="1189.6" y="588.2" width="223.50" height="268.25" fill="url(#pb2)"/></svg>
<div id="t138" style="position:absolute;left:20.02px;top:1007.67px;font-size:13.5px;line-height:13.5px;color:#444;font-weight:400;font-family:'Liberation Sans', sans-serif;white-space:nowrap;transform:scaleX(0.9817);transform-origin:0 0;">Page 28 of 37</div>
<div id="t139" style="position:absolute;left:132.01px;top:1007.67px;font-size:13.5px;line-height:13.5px;color:#444;font-weight:400;font-family:'Liberation Sans', sans-serif;white-space:nowrap;transform:scaleX(0.9855);transform-origin:0 0;">4164 words</div>
<svg style="position:absolute;left:224px;top:1005px;" width="22" height="20" viewBox="0 0 22 20"><path d="M1.5 1.5H7.5Q9.5 1.5 9.5 3.5V16.5M1.5 1.5V15.5H6M9.5 3.5Q9.5 1.5 11.5 1.5H16.5V8" fill="none" stroke="#555" stroke-width="1.2"/><path d="M9 10.5L17 18.5M17 10.5L9 18.5" stroke="#555" stroke-width="1.2"/></svg>
<div id="t140" style="position:absolute;left:268.80px;top:1007.67px;font-size:13.5px;line-height:13.5px;color:#444;font-weight:400;font-family:'Liberation Sans', sans-serif;white-space:nowrap;transform:scaleX(0.9483);transform-origin:0 0;">Text Predictions: On</div>
<svg style="position:absolute;left:407px;top:1005px;" width="22" height="20" viewBox="0 0 22 20"><rect x="1.5" y="1.5" width="17" height="14" fill="none" stroke="#555" stroke-width="1.2"/><path d="M1.5 4.5h17M4 8h3M4 11h3" stroke="#555" stroke-width="1.2"/><circle cx="13" cy="12" r="4.8" fill="#f3f2f1" stroke="#555" stroke-width="1.2"/><circle cx="13" cy="12" r="2.3" fill="#555"/></svg>
<svg style="position:absolute;left:447px;top:1004px;" width="22" height="22" viewBox="0 0 22 22"><circle cx="9.5" cy="3.5" r="2.2" fill="none" stroke="#555" stroke-width="1.1"/><path d="M2 6.5L7 8.5H12L17 6.5M7 8.5V12L4.5 19.5M12 8.5V11" fill="none" stroke="#555" stroke-width="1.1"/><path d="M10 13L17 20M17 13L10 20" stroke="#555" stroke-width="1.1"/></svg>
<div id="t141" style="position:absolute;left:470.41px;top:1007.67px;font-size:13.5px;line-height:13.5px;color:#444;font-weight:400;font-family:'Liberation Sans', sans-serif;white-space:nowrap;transform:scaleX(0.9363);transform-origin:0 0;">Accessibility: Investigate</div>
<svg style="position:absolute;left:1463px;top:1004px;" width="22" height="22" viewBox="0 0 22 22"><path d="M1.5 5V1.5H5M15 1.5H18.5V5M18.5 15V18.5H15M5 18.5H1.5V15" fill="none" stroke="#555" stroke-width="1.3"/><path d="M5.5 4.5H11L14.5 8V15.5H5.5Z" fill="none" stroke="#555" stroke-width="1.2"/><path d="M11 4.5V8H14.5" fill="none" stroke="#555" stroke-width="1.1"/></svg>
<div id="t142" style="position:absolute;left:1484.14px;top:1007.37px;font-size:13.5px;line-height:13.5px;color:#444;font-weight:400;font-family:'Liberation Sans', sans-serif;white-space:nowrap;transform:scaleX(0.9086);transform-origin:0 0;">Focus</div>
<svg style="position:absolute;left:1548px;top:1004px;" width="20" height="20" viewBox="0 0 20 20"><path d="M1 2.5H6.5Q9 2.5 9 4.5V17.5Q9 16 6.5 16H1Z M17 2.5H11.5Q9 2.5 9 4.5V17.5Q9 16 11.5 16H17Z" fill="none" stroke="#555" stroke-width="1.2"/><path d="M3 6h4M3 9h4M3 12h4M11 6h4M11 9h4M11 12h4" stroke="#555" stroke-width="1.1"/></svg>
<div style="position:absolute;left:1583px;top:1001px;width:50px;height:26px;background:#d2d2d2;"></div>
<svg style="position:absolute;left:1599px;top:1004px;" width="18" height="20" viewBox="0 0 18 20"><rect x="1.5" y="1.5" width="14" height="17" fill="none" stroke="#444" stroke-width="1.3"/><path d="M4 5h9M4 8h9M4 11h9M4 14h9" stroke="#444" stroke-width="1.2"/></svg>
<svg style="position:absolute;left:1648px;top:1004px;" width="22" height="22" viewBox="0 0 22 22"><path d="M12 1.5H1.5V18.5H8" fill="none" stroke="#555" stroke-width="1.2"/><path d="M12 1.5V8" stroke="#555" stroke-width="1.2"/><path d="M4 5h6M4 8h6M4 11h3" stroke="#555" stroke-width="1.1"/><circle cx="14" cy="15" r="5" fill="#f3f2f1" stroke="#555" stroke-width="1.2"/><path d="M9 15h10M14 10v10M14 10Q11 15 14 20Q17 15 14 10" fill="none" stroke="#555" stroke-width="1"/></svg>
<div style="position:absolute;left:1690px;top:1013px;width:10px;height:1.3px;background:#555;"></div>
<div style="position:absolute;left:1706px;top:1013.5px;width:125px;height:1px;background:#555;"></div>
<div style="position:absolute;left:1768px;top:1010px;width:1px;height:9px;background:#555;"></div>
<div style="position:absolute;left:1745px;top:1007px;width:6px;height:14px;background:#444;"></div>
<div style="position:absolute;left:1836.8px;top:1013.3px;width:10px;height:1.3px;background:#555;"></div>
<div style="position:absolute;left:1841.2px;top:1009px;width:1.3px;height:10px;background:#555;"></div>
<div id="t143" style="position:absolute;left:1862.46px;top:1007.37px;font-size:13.5px;line-height:13.5px;color:#444;font-weight:400;font-family:'Liberation Sans', sans-serif;white-space:nowrap;transform:scaleX(0.9154);transform-origin:0 0;">68%</div>
<div style="position:absolute;left:0px;top:1030px;width:1920px;height:50px;background:linear-gradient(90deg,#213a43 0%,#203843 40%,#1e3042 75%,#1c2a40 100%);"></div>
<svg style="position:absolute;left:19px;top:1044px;" width="22" height="22" viewBox="0 0 22 22"><path d="M0.8 3.2L8.8 2.1V9.9H0.8Z M10 1.9L20.8 0.4V9.9H10Z M0.8 11.1H8.8V18.9L0.8 17.8Z M10 11.1H20.8V20.6L10 19.1Z" fill="#fff"/></svg>
<div style="position:absolute;left:60px;top:1030px;width:360px;height:50px;background:#f2f2f2;border-top:1px solid #c8c8c8;box-sizing:border-box;"></div>
<svg style="position:absolute;left:74px;top:1044px;" width="23" height="23" viewBox="0 0 23 23"><circle cx="13.5" cy="8" r="6" fill="none" stroke="#222" stroke-width="1.5"/><path d="M9.3 12.3L1.2 20.5" stroke="#222" stroke-width="1.5"/></svg>
<div id="t144" style="position:absolute;left:110.80px;top:1046.46px;font-size:18px;line-height:18px;color:#222;font-weight:400;font-family:'Liberation Sans', sans-serif;white-space:nowrap;transform:scaleX(1.0342);transform-origin:0 0;">Type here to search</div>
<svg style="position:absolute;left:0;top:0;pointer-events:none" width="1920" height="1080"><g fill="none" stroke="#fff" stroke-width="1.3"><path d="M440.3 1045 V1047.9 H452.9 V1045"/><rect x="440.3" y="1050.8" width="12.6" height="7.2"/><path d="M440.3 1064 V1061 H452.9 V1064"/><path d="M458.3 1045 V1064"/></g><rect x="456.8" y="1051.3" width="3" height="3" fill="#fff"/></svg>
<svg style="position:absolute;left:0;top:0;pointer-events:none" width="1920" height="1080"><path d="M500.58 1047.25 A15.5 15.5 0 0 1 527.42 1047.25 L514.00 1047.25 A7.75 7.75 0 0 0 507.29 1058.88 Z" fill="#db4437"/><path d="M527.42 1047.25 A15.5 15.5 0 0 1 514.00 1070.50 L520.71 1058.88 A7.75 7.75 0 0 0 514.00 1047.25 Z" fill="#ffcd40"/><path d="M514.00 1070.50 A15.5 15.5 0 0 1 500.58 1047.25 L507.29 1058.88 A7.75 7.75 0 0 0 520.71 1058.88 Z" fill="#0f9d58"/><circle cx="514" cy="1055" r="7.6" fill="#fff"/><circle cx="514" cy="1055" r="6" fill="#3b7de8"/></svg>
<svg style="position:absolute;left:0;top:0;pointer-events:none" width="1920" height="1080"><rect x="562" y="1043" width="12.5" height="5" rx="1" fill="#e9a920"/><rect x="562" y="1044.8" width="27.3" height="20.5" rx="0.8" fill="#fdd560"/><rect x="562" y="1047" width="27.3" height="18.3" fill="#ffd866"/><path d="M567.2 1066 V1057 Q567.2 1055.3 569 1055.3 H583.2 Q585 1055.3 585 1057 V1066 H580.7 V1059 H571.4 V1066 Z" fill="#3a96e0"/></svg>
<svg style="position:absolute;left:0;top:0;pointer-events:none" width="1920" height="1080"><defs><linearGradient id="egt" x1="0" y1="0" x2="1" y2="0.6"><stop offset="0" stop-color="#2fb3f0"/><stop offset="0.5" stop-color="#2ec7c0"/><stop offset="1" stop-color="#6ae865"/></linearGradient><linearGradient id="egb" x1="0" y1="0" x2="0.3" y2="1"><stop offset="0" stop-color="#1b94e8"/><stop offset="1" stop-color="#0d6ccc"/></linearGradient></defs><path d="M651 1063.5 A15 15 0 1 1 653 1055 Z" fill="url(#egb)"/><path d="M623.2 1052.5 C624.5 1044 630.5 1039.9 638.2 1039.9 C647 1039.9 653.1 1046.5 653.1 1054 C653.1 1058.5 650 1060.8 646.5 1060.8 C643 1060.8 640.5 1059 640.5 1057 C642 1055 642 1051 637 1049.5 C631 1047.5 625 1049.5 623.2 1052.5 Z" fill="url(#egt)"/><path d="M637.5 1051.5 C632 1051.5 630 1057 631.5 1062 C633.5 1068 641 1070 646 1068.2 C648.5 1067.2 650.2 1065.5 651 1063.8 C647 1065.2 641.5 1064 639 1060.5 Z" fill="#0b55a6"/><circle cx="638.3" cy="1055" r="3.4" fill="#213a43"/></svg>
<svg style="position:absolute;left:0;top:0;pointer-events:none" width="1920" height="1080"><defs><linearGradient id="npg" x1="0" y1="0" x2="0" y2="1"><stop offset="0" stop-color="#f4f4ee"/><stop offset="0.4" stop-color="#e8f090"/><stop offset="1" stop-color="#3fbf2a"/></linearGradient></defs><path d="M686 1042.5 H703 L707 1045 L708.5 1067 L686.5 1068.5 Z" fill="url(#npg)" stroke="#d8d8d8" stroke-width="1"/><path d="M686.5 1043 H703 V1045.5 H686.5Z" fill="#cfcfcf"/><ellipse cx="696.5" cy="1054" rx="5" ry="3.5" fill="#3aa535"/><path d="M690 1056 Q697 1053 704 1056" stroke="#4a2a1a" stroke-width="0.9" fill="none"/><circle cx="699.5" cy="1050.5" r="2.2" fill="#e6e6e6" stroke="#666" stroke-width="0.6"/><path d="M705 1061.5 L713.2 1041.8" stroke="#e8a820" stroke-width="2"/><path d="M712.6 1043 L713.7 1040.5" stroke="#c03030" stroke-width="2"/></svg>
<div style="position:absolute;left:732px;top:1030px;width:56px;height:50px;background:#3e5058;"></div>
<div style="position:absolute;left:788px;top:1030px;width:1.5px;height:50px;background:#55656c;"></div>
<svg style="position:absolute;left:745px;top:1039.5px;" width="34" height="30" viewBox="0 0 34 30"><rect x="8" y="1.5" width="23" height="27" rx="1.5" fill="#41a5ee"/><rect x="8" y="10" width="23" height="9" fill="#2b7cd3"/><rect x="8" y="19" width="23" height="9.5" rx="1" fill="#185abd"/><rect x="1" y="7.5" width="16" height="16" rx="1.5" fill="#185abd"/><text x="9" y="20.5" text-anchor="middle" font-family="Liberation Sans" font-weight="700" font-size="12" fill="#fff">W</text></svg>
<svg style="position:absolute;left:807px;top:1039.5px;" width="34" height="30" viewBox="0 0 34 30"><rect x="8" y="1.5" width="23" height="27" rx="1.5" fill="#33c481"/><rect x="8" y="10" width="23" height="9" fill="#21a366"/><rect x="8" y="19" width="23" height="9.5" rx="1" fill="#107c41"/><rect x="1" y="7.5" width="16" height="16" rx="1.5" fill="#107c41"/><text x="9" y="20.5" text-anchor="middle" font-family="Liberation Sans" font-weight="700" font-size="12" fill="#fff">X</text></svg>
<svg style="position:absolute;left:869px;top:1038.5px;" width="36" height="32" viewBox="0 0 36 32"><rect x="9" y="1.5" width="22" height="20" rx="1" fill="#28a8ea"/><rect x="9" y="1.5" width="11" height="10" fill="#0364b8"/><rect x="20" y="11.5" width="11" height="10" fill="#0078d4"/><rect x="1" y="7.5" width="16" height="16" rx="1.5" fill="#0f6cbd"/><text x="9" y="20.5" text-anchor="middle" font-family="Liberation Sans" font-weight="700" font-size="12" fill="#fff">O</text><rect x="18" y="17" width="16" height="13.5" rx="1" fill="#f2c080"/><path d="M18.5 17.5L26 24L33.5 17.5" fill="none" stroke="#fff" stroke-width="1.2"/></svg>
<svg style="position:absolute;left:931px;top:1040px;" width="36" height="32" viewBox="0 0 36 32"><circle cx="25" cy="6" r="4" fill="#7b83eb"/><circle cx="29.5" cy="10" r="3" fill="#5059c9"/><rect x="12" y="9" width="19" height="16" rx="4" fill="#7b83eb"/><rect x="1" y="7" width="15" height="15" rx="1.5" fill="#4b53bc"/><text x="8.5" y="19" text-anchor="middle" font-family="Liberation Sans" font-weight="700" font-size="11" fill="#fff">T</text><circle cx="24" cy="21.5" r="9" fill="#c4314b" stroke="#1f3540" stroke-width="1"/><text x="24" y="26" text-anchor="middle" font-family="Liberation Sans" font-weight="700" font-size="11" fill="#fff">9+</text></svg>
<div style="position:absolute;left:489px;top:1077px;width:51px;height:3px;background:#76b9ed;"></div>
<div style="position:absolute;left:551px;top:1077px;width:51px;height:3px;background:#76b9ed;"></div>
<div style="position:absolute;left:732px;top:1077px;width:56px;height:3px;background:#76b9ed;"></div>
<div style="position:absolute;left:799px;top:1077px;width:51px;height:3px;background:#76b9ed;"></div>
<div style="position:absolute;left:861px;top:1077px;width:51.5px;height:3px;background:#76b9ed;"></div>
<div style="position:absolute;left:923px;top:1077px;width:51.5px;height:3px;background:#76b9ed;"></div>
<svg style="position:absolute;left:1564px;top:1040px;" width="26" height="30" viewBox="0 0 26 30"><rect x="5" y="1.5" width="7" height="20" rx="3.5" fill="#9fd3f7"/><circle cx="8.5" cy="22.5" r="6.5" fill="#9fd3f7"/><rect x="7" y="5" width="3" height="15" fill="#e0607a"/><circle cx="8.5" cy="22.5" r="4" fill="#1a8be0"/><path d="M20.5 25.5V12M17 15.5L20.5 9.5L24 15.5Z" fill="#e81123" stroke="#e81123" stroke-width="1.6"/></svg>
<div id="t145" style="position:absolute;left:1602.77px;top:1046.56px;font-size:18px;line-height:18px;color:#fff;font-weight:400;font-family:'Liberation Sans', sans-serif;white-space:nowrap;transform:scaleX(0.9593);transform-origin:0 0;">Temps rise</div>
<svg style="position:absolute;left:1715px;top:1049px;" width="20" height="12" viewBox="0 0 20 12"><polyline points="2,9.5 9.5,2 17,9.5" fill="none" stroke="#fff" stroke-width="1.4"/></svg>
<svg style="position:absolute;left:1743px;top:1045px;" width="24" height="20" viewBox="0 0 24 20"><path d="M1.5 7H5.5L11 2V18L5.5 13H1.5Z" fill="none" stroke="#fff" stroke-width="1.2"/><path d="M14 7.5Q16 10 14 12.5M17 5Q20.5 10 17 15M20 2.5Q25 10 20 17.5" fill="none" stroke="#fff" stroke-width="1.2"/></svg>
<div id="t146" style="position:absolute;left:1782.25px;top:1036.20px;font-size:15px;line-height:15px;color:#fff;font-weight:400;font-family:'Liberation Sans', sans-serif;white-space:nowrap;transform:scaleX(0.9387);transform-origin:0 0;">12:34 PM</div>
<div id="t147" style="position:absolute;left:1777.58px;top:1058.70px;font-size:15px;line-height:15px;color:#fff;font-weight:400;font-family:'Liberation Sans', sans-serif;white-space:nowrap;transform:scaleX(1.0292);transform-origin:0 0;">3/19/2023</div>
<svg style="position:absolute;left:1867px;top:1044px;" width="24" height="22" viewBox="0 0 24 22"><path d="M2 1.5H22V17H14L12 20L10 17H2Z" fill="#fff"/><path d="M5.5 5.5H18.5M5.5 9H18.5M5.5 12.5H14" stroke="#1c2a40" stroke-width="1.3"/></svg>
<div style="position:absolute;left:1914px;top:1030px;width:1px;height:50px;background:#50607a;"></div>
</body></html>
